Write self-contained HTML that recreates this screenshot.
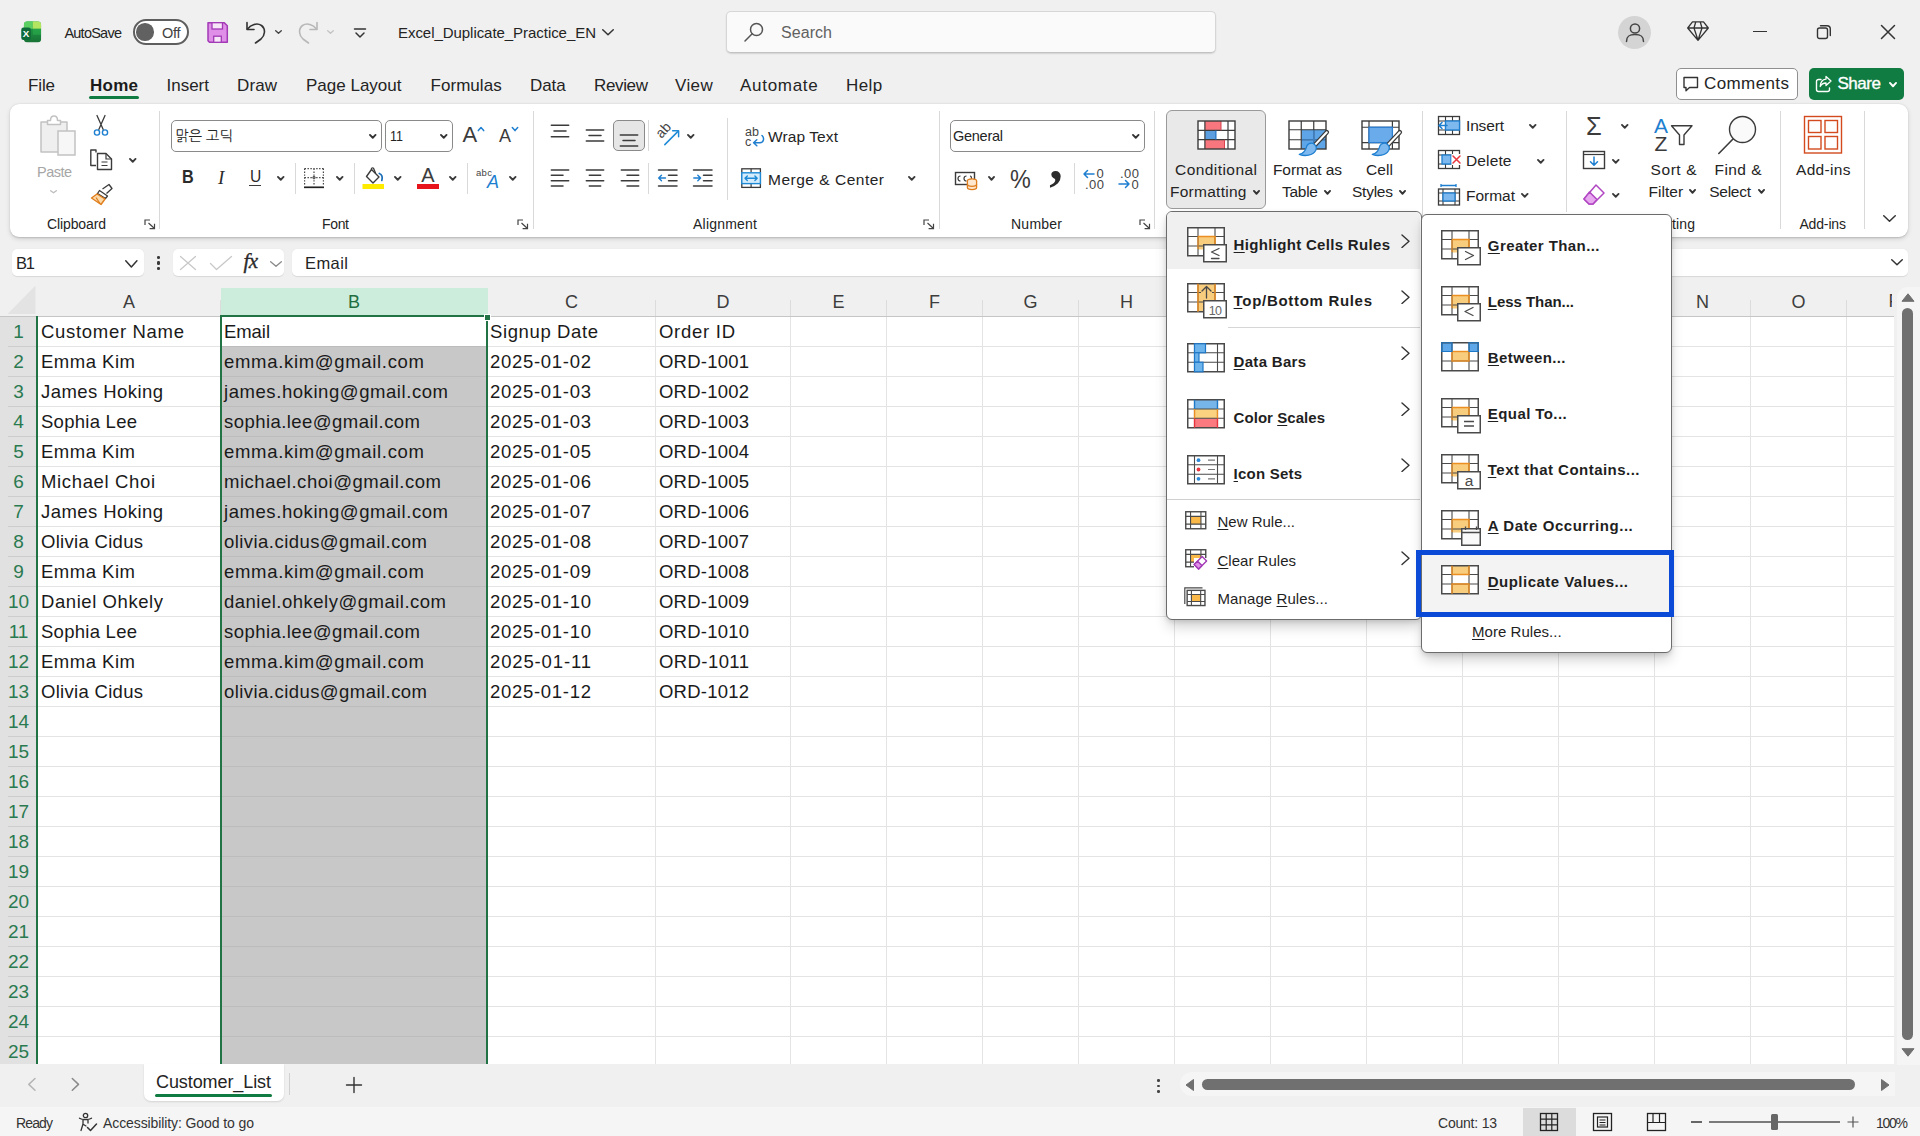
<!DOCTYPE html>
<html lang="en"><head><meta charset="utf-8"><title>Excel_Duplicate_Practice_EN - Excel</title>
<style>
html,body{margin:0;padding:0;}
body{width:1920px;height:1136px;overflow:hidden;background:#f0f0f0;position:relative;font-family:'Liberation Sans', 'NanumGothic', sans-serif;}
body div, body span.t, body svg{position:absolute;}
span.t{white-space:nowrap;display:block;}
u{text-decoration:underline;text-underline-offset:2px;text-decoration-thickness:1px;}
</style></head>
<body>
<svg style="left:20px;top:20px;" width="24" height="24" viewBox="0 0 24 24">
<defs><clipPath id="xlc"><rect x="3.75" y="1.25" width="17.5" height="21.25" rx="4"/></clipPath>
<linearGradient id="xlg" x1="0" y1="0" x2="0" y2="1"><stop offset="0" stop-color="#23a448"/><stop offset="1" stop-color="#187236"/></linearGradient></defs>
<g clip-path="url(#xlc)">
<rect x="3.75" y="1.25" width="17.5" height="21.25" fill="url(#xlg)"/>
<rect x="3.75" y="1.25" width="9" height="7.5" fill="#5ccf63"/>
<rect x="12.75" y="1.25" width="8.5" height="7.5" fill="#b4e561"/>
<rect x="12.75" y="8.75" width="8.5" height="6" fill="#2bb04f" opacity=".55"/>
</g>
<rect x="1.25" y="7.5" width="9.6" height="12.5" rx="2.2" fill="#0f6a3a"/>
<text x="6.05" y="17.3" font-size="9.8" font-weight="700" fill="#fff" text-anchor="middle" font-family="Liberation Sans">X</text>
</svg>
<span id="t1" class="t" style="left:64.4px;top:22.68px;font-size:14.5px;line-height:20px;color:#242424;letter-spacing:-0.756px;">AutoSave</span>
<div style="left:133px;top:19.4px;width:51.7px;height:21.6px;background:#fff;border:2px solid #5e5e5e;border-radius:14px;"></div>
<div style="left:136.25px;top:23.1px;width:17.5px;height:17.5px;background:#616161;border-radius:50%;"></div>
<span id="t2" class="t" style="left:162px;top:22.68px;font-size:14.5px;line-height:20px;color:#424242;letter-spacing:-0.239px;">Off</span>
<svg style="left:206px;top:21px;" width="24" height="24" viewBox="0 0 24 24">
<path d="M2 1.7 H18.3 L21.3 4.7 V21.3 H3.5 L2 19.8 Z" fill="#e08fe8" stroke="#a23ab6" stroke-width="1.5" stroke-linejoin="round"/>
<rect x="6" y="1.7" width="10.5" height="6.3" fill="#f6e6f8" stroke="#a23ab6" stroke-width="1.3"/>
<rect x="7.7" y="15.2" width="7.6" height="6.1" fill="#f6e6f8" stroke="#a23ab6" stroke-width="1.3"/>
</svg>
<svg style="left:244px;top:19px;" width="24" height="26" viewBox="0 0 24 26">
<path d="M3 3.5 V10.5 H10" fill="none" stroke="#333" stroke-width="1.6" stroke-linecap="round" stroke-linejoin="round"/>
<path d="M3.5 10 C7 5.5 13 3.5 17.5 6.5 C22 10 21 16.5 17 20 L11.5 24" fill="none" stroke="#333" stroke-width="1.6" stroke-linecap="round"/>
</svg>
<svg style="left:274px;top:29px;" width="9" height="6" viewBox="0 0 9 6"><path d="M1.7 1.7 L4.5 4.3 L7.3 1.7" fill="none" stroke="#444" stroke-width="1.4" stroke-linecap="round" stroke-linejoin="round"/></svg>
<svg style="left:296px;top:19px;" width="24" height="26" viewBox="0 0 24 26">
<path d="M21 3.5 V10.5 H14" fill="none" stroke="#b8b8b8" stroke-width="1.6" stroke-linecap="round" stroke-linejoin="round"/>
<path d="M20.5 10 C17 5.5 11 3.5 6.5 6.5 C2 10 3 16.5 7 20 L12.5 24" fill="none" stroke="#b8b8b8" stroke-width="1.6" stroke-linecap="round"/>
</svg>
<svg style="left:326px;top:29px;" width="9" height="6" viewBox="0 0 9 6"><path d="M1.7 1.7 L4.5 4.3 L7.3 1.7" fill="none" stroke="#c4c4c4" stroke-width="1.4" stroke-linecap="round" stroke-linejoin="round"/></svg>
<svg style="left:353px;top:27px;" width="14" height="12" viewBox="0 0 14 12"><path d="M1.5 2 H12.5" stroke="#333" stroke-width="1.5" stroke-linecap="round"/><path d="M3 6 L7 10 L11 6" fill="none" stroke="#333" stroke-width="1.5" stroke-linecap="round" stroke-linejoin="round"/></svg>
<span id="t3" class="t" style="left:398px;top:22.30px;font-size:15px;line-height:21px;color:#242424;letter-spacing:-0.049px;">Excel_Duplicate_Practice_EN</span>
<svg style="left:601px;top:28px;" width="14" height="8.5" viewBox="0 0 14 8.5"><path d="M1.75 1.75 L7.0 6.75 L12.25 1.75" fill="none" stroke="#333" stroke-width="1.5" stroke-linecap="round" stroke-linejoin="round"/></svg>
<div style="left:726px;top:11px;width:488px;height:40px;background:#fafafa;border:1px solid #d6d6d6;border-bottom-color:#c2c2c2;border-radius:5px;box-shadow:0 1px 1.5px rgba(0,0,0,.12);"></div>
<svg style="left:743px;top:21px;" width="22" height="22" viewBox="0 0 22 22"><circle cx="13.5" cy="8.5" r="6" fill="none" stroke="#555" stroke-width="1.5"/><path d="M9.2 12.8 L2 20" stroke="#555" stroke-width="1.5" stroke-linecap="round"/></svg>
<span id="t4" class="t" style="left:781px;top:22.26px;font-size:16px;line-height:22px;color:#616161;letter-spacing:0.059px;">Search</span>
<div style="left:1618px;top:16px;width:33px;height:33px;background:#d4d4d4;border-radius:50%;"></div>
<svg style="left:1622px;top:19px;" width="26" height="26" viewBox="0 0 26 26"><circle cx="13" cy="9.5" r="4.6" fill="none" stroke="#444" stroke-width="1.5"/><path d="M4.5 22.5 C4.5 16.5 8 15.5 13 15.5 C18 15.5 21.5 16.5 21.5 22.5" fill="none" stroke="#444" stroke-width="1.5" stroke-linecap="round"/></svg>
<svg style="left:1686px;top:20px;" width="24" height="22" viewBox="0 0 24 22"><path d="M6.5 1.8 H17.5 L22.3 8 L12 20.3 L1.7 8 Z M1.7 8 H22.3 M9.8 1.8 L8 8 L12 20.3 L16 8 L14.2 1.8" fill="none" stroke="#333" stroke-width="1.3" stroke-linejoin="round"/></svg>
<div style="left:1753px;top:30.5px;width:14px;height:1.5px;background:#333;"></div>
<svg style="left:1816px;top:24px;" width="16" height="16" viewBox="0 0 16 16"><rect x="1.5" y="4" width="10" height="10.5" rx="2" fill="none" stroke="#333" stroke-width="1.4"/><path d="M4.5 1.7 H11 C13 1.7 14.3 3 14.3 5 V11.5" fill="none" stroke="#333" stroke-width="1.4" stroke-linecap="round"/></svg>
<svg style="left:1880px;top:24px;" width="16" height="16" viewBox="0 0 16 16"><path d="M1.5 1.5 L14.5 14.5 M14.5 1.5 L1.5 14.5" stroke="#333" stroke-width="1.5" stroke-linecap="round"/></svg>
<span id="t5" class="t" style="left:28px;top:73.71px;font-size:17px;line-height:24px;color:#242424;letter-spacing:-0.135px;">File</span>
<span id="t6" class="t" style="left:90px;top:73.71px;font-size:17px;line-height:24px;color:#1b1b1b;font-weight:700;letter-spacing:0.255px;">Home</span>
<span id="t7" class="t" style="left:166.5px;top:73.71px;font-size:17px;line-height:24px;color:#242424;letter-spacing:-0.006px;">Insert</span>
<span id="t8" class="t" style="left:237px;top:73.71px;font-size:17px;line-height:24px;color:#242424;letter-spacing:0.109px;">Draw</span>
<span id="t9" class="t" style="left:306px;top:73.71px;font-size:17px;line-height:24px;color:#242424;letter-spacing:0.003px;">Page Layout</span>
<span id="t10" class="t" style="left:430.5px;top:73.71px;font-size:17px;line-height:24px;color:#242424;letter-spacing:0.049px;">Formulas</span>
<span id="t11" class="t" style="left:530px;top:73.71px;font-size:17px;line-height:24px;color:#242424;letter-spacing:-0.074px;">Data</span>
<span id="t12" class="t" style="left:594px;top:73.71px;font-size:17px;line-height:24px;color:#242424;letter-spacing:-0.350px;">Review</span>
<span id="t13" class="t" style="left:675px;top:73.71px;font-size:17px;line-height:24px;color:#242424;letter-spacing:0.384px;">View</span>
<span id="t14" class="t" style="left:740px;top:73.71px;font-size:17px;line-height:24px;color:#242424;letter-spacing:0.705px;">Automate</span>
<span id="t15" class="t" style="left:846px;top:73.71px;font-size:17px;line-height:24px;color:#242424;letter-spacing:0.444px;">Help</span>
<div style="left:89px;top:96px;width:50px;height:3px;background:#107c41;border-radius:1.5px;"></div>
<div style="left:1676px;top:68px;width:120px;height:30px;background:#fff;border:1px solid #8f8f8f;border-radius:5px;"></div>
<svg style="left:1682px;top:76px;" width="18" height="17" viewBox="0 0 18 17"><path d="M2 1.5 H15.5 V11.5 H7.5 L4 14.8 V11.5 H2 Z" fill="none" stroke="#333" stroke-width="1.4" stroke-linejoin="round"/></svg>
<span id="t16" class="t" style="left:1704px;top:72.31px;font-size:17px;line-height:24px;color:#242424;letter-spacing:0.402px;">Comments</span>
<div style="left:1809px;top:68px;width:95px;height:32px;background:#107c41;border-radius:5px;"></div>
<svg style="left:1815px;top:75px;" width="18" height="18" viewBox="0 0 18 18"><path d="M6 4.5 H3.5 C2.4 4.5 1.5 5.4 1.5 6.5 V14.5 C1.5 15.6 2.4 16.5 3.5 16.5 H12.5 C13.6 16.5 14.5 15.6 14.5 14.5 V13" fill="none" stroke="#fff" stroke-width="1.4" stroke-linecap="round"/><path d="M11 1.5 L16 6 L11 10.5 V8 C8 8 6.3 9.2 5.2 11.5 C5.4 7.5 7.5 4.5 11 4.2 Z" fill="none" stroke="#fff" stroke-width="1.3" stroke-linejoin="round"/></svg>
<span id="t17" class="t" style="left:1837.5px;top:72.31px;font-size:17px;line-height:24px;color:#fff;letter-spacing:-0.469px;-webkit-text-stroke:0.35px #fff;">Share</span>
<svg style="left:1888px;top:81px;" width="10" height="7.2" viewBox="0 0 10 7.2"><path d="M1.95 1.95 L5.0 5.25 L8.05 1.95" fill="none" stroke="#fff" stroke-width="1.9" stroke-linecap="round" stroke-linejoin="round"/></svg>
<div style="left:10px;top:104px;width:1898px;height:133px;background:#fff;border-radius:9px;box-shadow:0 2px 5px rgba(0,0,0,.13),0 0.5px 1.5px rgba(0,0,0,.14);"></div>
<svg style="left:38px;top:114px;" width="40" height="44" viewBox="0 0 40 44">
<path d="M3 8 H29 V38 H3 Z" fill="#efefef" stroke="#c2c2c2" stroke-width="1.5" stroke-linejoin="round"/>
<path d="M9.5 10.5 V6.5 H12.5 C12.5 3.5 14 2 16 2 C18 2 19.5 3.5 19.5 6.5 H22.5 V10.5 Z" fill="#fff" stroke="#c2c2c2" stroke-width="1.5" stroke-linejoin="round"/>
<rect x="20" y="17" width="17" height="24" fill="#f7f7f7" stroke="#c2c2c2" stroke-width="1.5"/>
</svg>
<span id="t18" class="t" style="left:37px;top:161.98px;font-size:14.5px;line-height:20px;color:#a6a6a6;letter-spacing:-0.523px;">Paste</span>
<svg style="left:49px;top:189px;" width="9" height="5.5" viewBox="0 0 9 5.5"><path d="M1.65 1.65 L4.5 3.85 L7.35 1.65" fill="none" stroke="#bdbdbd" stroke-width="1.3" stroke-linecap="round" stroke-linejoin="round"/></svg>
<svg style="left:92px;top:113px;" width="18" height="26" viewBox="0 0 18 26">
<path d="M5 2.5 L11.2 16.5 M13 2.5 L6.8 16.5" stroke="#3b3b3b" stroke-width="1.3" stroke-linecap="round"/>
<circle cx="5" cy="19.5" r="2.6" fill="none" stroke="#1e7fd0" stroke-width="1.4"/>
<circle cx="13" cy="19.5" r="2.6" fill="none" stroke="#1e7fd0" stroke-width="1.4"/>
</svg>
<svg style="left:89px;top:148px;" width="25" height="24" viewBox="0 0 25 24">
<path d="M7 4.5 V2 H1.8 V17.5 H7" fill="none" stroke="#3b3b3b" stroke-width="1.4" stroke-linejoin="round"/>
<path d="M8.5 5.5 H17 L22.5 11 V21.5 H8.5 Z" fill="#fff" stroke="#3b3b3b" stroke-width="1.4" stroke-linejoin="round"/>
<path d="M17 5.5 V11 H22.5" fill="none" stroke="#3b3b3b" stroke-width="1.2"/>
<path d="M12.5 14 H18.5 M12.5 17.5 H18.5" stroke="#3b3b3b" stroke-width="1.2"/>
</svg>
<svg style="left:128px;top:157px;" width="9.5" height="6.7" viewBox="0 0 9.5 6.7"><path d="M1.95 1.95 L4.75 4.75 L7.55 1.95" fill="none" stroke="#3a3a3a" stroke-width="1.9" stroke-linecap="round" stroke-linejoin="round"/></svg>
<svg style="left:90px;top:183px;" width="24" height="23" viewBox="0 0 24 23">
<path d="M12.5 6 L19 1.5 L22 5.5 L16.5 10.5" fill="#fff" stroke="#3b3b3b" stroke-width="1.3" stroke-linejoin="round"/>
<path d="M9.5 7.5 L17.5 13 L15.5 15.5 L7.5 10.5 Z" fill="#fff" stroke="#3b3b3b" stroke-width="1.3" stroke-linejoin="round"/>
<path d="M7 11 L15 16 L11 21.5 L1.5 15 Z" fill="#fbd9a8" stroke="#e07d1c" stroke-width="1.4" stroke-linejoin="round"/>
<path d="M6 14.5 L10 20.5" stroke="#e07d1c" stroke-width="1.2"/>
</svg>
<span id="t19" class="t" style="left:47px;top:214.15px;font-size:14px;line-height:20px;color:#242424;letter-spacing:-0.117px;">Clipboard</span>
<svg style="left:144px;top:218.5px;" width="12" height="11" viewBox="0 0 12 11"><path d="M1 6 V1 H6" fill="none" stroke="#444" stroke-width="1.2"/><path d="M4.5 4 L10.5 9.5 M10.5 4.8 V9.7 H5.6" fill="none" stroke="#444" stroke-width="1.2" stroke-linejoin="miter"/></svg>
<div style="left:159px;top:111px;width:1px;height:118px;background:#d9d9d9;"></div>
<div style="left:171px;top:120px;width:209px;height:30px;background:#fff;border:1px solid #8a8a8a;border-radius:5px;"></div>
<span id="t20" class="t" style="left:175px;top:125.98px;font-size:14.5px;line-height:20px;color:#242424;letter-spacing:-0.141px;">맑은 고딕</span>
<svg style="left:368px;top:133px;" width="9.5" height="6.7" viewBox="0 0 9.5 6.7"><path d="M1.95 1.95 L4.75 4.75 L7.55 1.95" fill="none" stroke="#333" stroke-width="1.9" stroke-linecap="round" stroke-linejoin="round"/></svg>
<div style="left:385px;top:120px;width:66px;height:30px;background:#fff;border:1px solid #8a8a8a;border-radius:5px;"></div>
<span id="t21" class="t" style="left:389.5px;top:125.98px;font-size:14.5px;line-height:20px;color:#242424;transform:scaleX(.86);transform-origin:0 0;">11</span>
<svg style="left:439px;top:133px;" width="9.5" height="6.7" viewBox="0 0 9.5 6.7"><path d="M1.95 1.95 L4.75 4.75 L7.55 1.95" fill="none" stroke="#333" stroke-width="1.9" stroke-linecap="round" stroke-linejoin="round"/></svg>
<span id="t22" class="t" style="left:462.5px;top:119.38px;font-size:22px;line-height:31px;color:#3b3b3b;">A</span>
<svg style="left:475.5px;top:124.5px;" width="10" height="8" viewBox="0 0 10 8"><path d="M2.3 5.6 L5 2.6 L7.7 5.6" fill="none" stroke="#1e7fd0" stroke-width="1.5" stroke-linecap="round" stroke-linejoin="round"/></svg>
<span id="t23" class="t" style="left:499px;top:123.76px;font-size:18px;line-height:25px;color:#3b3b3b;">A</span>
<svg style="left:509.5px;top:124.5px;" width="10" height="8" viewBox="0 0 10 8"><path d="M2.3 2.6 L5 5.6 L7.7 2.6" fill="none" stroke="#1e7fd0" stroke-width="1.5" stroke-linecap="round" stroke-linejoin="round"/></svg>
<span id="t24" class="t" style="left:181.5px;top:164.96px;font-size:18px;line-height:25px;color:#2b2b2b;font-weight:700;transform:scaleX(.9);transform-origin:0 0;">B</span>
<span id="t25" class="t" style="left:216px;top:163.62px;font-size:19px;line-height:27px;color:#2b2b2b;font-style:italic;font-family:'Liberation Serif', serif;padding-left:2px;">I</span>
<span id="t26" class="t" style="left:249.5px;top:165.11px;font-size:17px;line-height:24px;color:#2b2b2b;transform:scaleX(.92);transform-origin:0 0;">U</span>
<div style="left:249.3px;top:185px;width:12px;height:1.4px;background:#3a3a3a;"></div>
<svg style="left:276px;top:175px;" width="9.5" height="6.7" viewBox="0 0 9.5 6.7"><path d="M1.95 1.95 L4.75 4.75 L7.55 1.95" fill="none" stroke="#3a3a3a" stroke-width="1.9" stroke-linecap="round" stroke-linejoin="round"/></svg>
<div style="left:295px;top:163px;width:1px;height:31px;background:#d9d9d9;"></div>
<svg style="left:303px;top:167px;" width="22" height="22" viewBox="0 0 22 22">
<path d="M1.6 1.6 H20.4 M1.6 1.6 V19 M20.4 1.6 V19 M11 1.6 V19 M1.6 10.6 H20.4" stroke="#444" stroke-width="1.2" stroke-dasharray="1.4 1.5" fill="none"/>
<circle cx="11" cy="10.6" r="1.3" fill="none" stroke="#444" stroke-width="0.9"/>
<path d="M1 20.3 H21" stroke="#222" stroke-width="1.7"/>
</svg>
<svg style="left:335px;top:175px;" width="9.5" height="6.7" viewBox="0 0 9.5 6.7"><path d="M1.95 1.95 L4.75 4.75 L7.55 1.95" fill="none" stroke="#3a3a3a" stroke-width="1.9" stroke-linecap="round" stroke-linejoin="round"/></svg>
<div style="left:354px;top:163px;width:1px;height:31px;background:#d9d9d9;"></div>
<svg style="left:362px;top:166px;" width="24" height="25" viewBox="0 0 24 25">
<path d="M9.5 3.5 L17 11 L11 17 L4.5 10.5 Z" fill="#fff" stroke="#3b3b3b" stroke-width="1.4" stroke-linejoin="round"/>
<path d="M9.5 3.5 C9 2.2 10.5 1.4 11.5 2.2 L13.5 7" fill="none" stroke="#3b3b3b" stroke-width="1.3" stroke-linecap="round"/>
<path d="M17.3 7.5 C19.8 8.5 20.8 11 19.8 14.5" fill="none" stroke="#1e6fb8" stroke-width="1.7" stroke-linecap="round"/>
<rect x="0.5" y="18" width="21.5" height="5" fill="#ffeb00"/>
</svg>
<svg style="left:393px;top:175px;" width="9.5" height="6.7" viewBox="0 0 9.5 6.7"><path d="M1.95 1.95 L4.75 4.75 L7.55 1.95" fill="none" stroke="#3a3a3a" stroke-width="1.9" stroke-linecap="round" stroke-linejoin="round"/></svg>
<span id="t27" class="t" style="left:421.3px;top:161.07px;font-size:20px;line-height:28px;color:#3b3b3b;">A</span>
<div style="left:417.2px;top:184.2px;width:21.5px;height:5px;background:#e8141c;"></div>
<svg style="left:448px;top:175px;" width="9.5" height="6.7" viewBox="0 0 9.5 6.7"><path d="M1.95 1.95 L4.75 4.75 L7.55 1.95" fill="none" stroke="#3a3a3a" stroke-width="1.9" stroke-linecap="round" stroke-linejoin="round"/></svg>
<div style="left:467px;top:163px;width:1px;height:31px;background:#d9d9d9;"></div>
<span id="t28" class="t" style="left:476px;top:166.21px;font-size:9.5px;line-height:13px;color:#444;letter-spacing:0.336px;">abc</span>
<span id="t29" class="t" style="left:487px;top:170.26px;font-size:18px;line-height:25px;color:#1e7fd0;font-style:italic;">A</span>
<svg style="left:508px;top:175px;" width="9.5" height="6.7" viewBox="0 0 9.5 6.7"><path d="M1.95 1.95 L4.75 4.75 L7.55 1.95" fill="none" stroke="#3a3a3a" stroke-width="1.9" stroke-linecap="round" stroke-linejoin="round"/></svg>
<span id="t30" class="t" style="left:322px;top:214.15px;font-size:14px;line-height:20px;color:#242424;letter-spacing:-0.339px;">Font</span>
<svg style="left:517px;top:218.5px;" width="12" height="11" viewBox="0 0 12 11"><path d="M1 6 V1 H6" fill="none" stroke="#444" stroke-width="1.2"/><path d="M4.5 4 L10.5 9.5 M10.5 4.8 V9.7 H5.6" fill="none" stroke="#444" stroke-width="1.2" stroke-linejoin="miter"/></svg>
<div style="left:532.5px;top:111px;width:1px;height:118px;background:#d9d9d9;"></div>
<svg style="left:548px;top:120px;" width="24" height="24" viewBox="0 0 24 24"><path d="M3.3 5.3 H20.7" stroke="#3b3b3b" stroke-width="1.5" stroke-linecap="round"/><path d="M6 11 H18" stroke="#3b3b3b" stroke-width="1.5" stroke-linecap="round"/><path d="M3.3 16.7 H20.7" stroke="#3b3b3b" stroke-width="1.5" stroke-linecap="round"/></svg>
<svg style="left:582.5px;top:120px;" width="24" height="24" viewBox="0 0 24 24"><path d="M3.3 10 H20.7" stroke="#3b3b3b" stroke-width="1.5" stroke-linecap="round"/><path d="M6 15.6 H18" stroke="#3b3b3b" stroke-width="1.5" stroke-linecap="round"/><path d="M3.3 21 H20.7" stroke="#3b3b3b" stroke-width="1.5" stroke-linecap="round"/></svg>
<div style="left:613px;top:120px;width:30px;height:29px;background:#e6e6e6;border:1px solid #8a8a8a;border-radius:5px;"></div>
<svg style="left:617px;top:127px;" width="24" height="24" viewBox="0 0 24 24"><path d="M3.3 8 H20.7" stroke="#3b3b3b" stroke-width="1.5" stroke-linecap="round"/><path d="M6 13.6 H18" stroke="#3b3b3b" stroke-width="1.5" stroke-linecap="round"/><path d="M3.3 19 H20.7" stroke="#3b3b3b" stroke-width="1.5" stroke-linecap="round"/></svg>
<div style="left:648px;top:120px;width:1px;height:31px;background:#d9d9d9;"></div>
<svg style="left:654px;top:122px;" width="30" height="28" viewBox="0 0 30 28">
<text x="0" y="0" font-size="14" fill="#444" font-family="Liberation Sans" transform="translate(7.5,17) rotate(-48)">ab</text>
<path d="M10.8 22.6 L24 9.4" stroke="#1e8ad6" stroke-width="1.5" stroke-linecap="round"/>
<path d="M18.6 8.8 H24.6 V14.8" fill="none" stroke="#1e8ad6" stroke-width="1.5" stroke-linecap="round" stroke-linejoin="round"/>
</svg>
<svg style="left:686px;top:133px;" width="9.5" height="6.7" viewBox="0 0 9.5 6.7"><path d="M1.95 1.95 L4.75 4.75 L7.55 1.95" fill="none" stroke="#3a3a3a" stroke-width="1.9" stroke-linecap="round" stroke-linejoin="round"/></svg>
<svg style="left:548px;top:163px;" width="24" height="24" viewBox="0 0 24 24"><path d="M3.3 7 H20.7" stroke="#3b3b3b" stroke-width="1.5" stroke-linecap="round"/><path d="M3.3 12.3 H15" stroke="#3b3b3b" stroke-width="1.5" stroke-linecap="round"/><path d="M3.3 17.7 H20.7" stroke="#3b3b3b" stroke-width="1.5" stroke-linecap="round"/><path d="M3.3 23 H15" stroke="#3b3b3b" stroke-width="1.5" stroke-linecap="round"/></svg>
<svg style="left:582.5px;top:163px;" width="24" height="24" viewBox="0 0 24 24"><path d="M3.3 7 H20.7" stroke="#3b3b3b" stroke-width="1.5" stroke-linecap="round"/><path d="M6.3 12.3 H17.7" stroke="#3b3b3b" stroke-width="1.5" stroke-linecap="round"/><path d="M3.3 17.7 H20.7" stroke="#3b3b3b" stroke-width="1.5" stroke-linecap="round"/><path d="M6.3 23 H17.7" stroke="#3b3b3b" stroke-width="1.5" stroke-linecap="round"/></svg>
<svg style="left:617.5px;top:163px;" width="24" height="24" viewBox="0 0 24 24"><path d="M3.3 7 H20.7" stroke="#3b3b3b" stroke-width="1.5" stroke-linecap="round"/><path d="M9 12.3 H20.7" stroke="#3b3b3b" stroke-width="1.5" stroke-linecap="round"/><path d="M3.3 17.7 H20.7" stroke="#3b3b3b" stroke-width="1.5" stroke-linecap="round"/><path d="M9 23 H20.7" stroke="#3b3b3b" stroke-width="1.5" stroke-linecap="round"/></svg>
<div style="left:648px;top:163px;width:1px;height:31px;background:#d9d9d9;"></div>
<svg style="left:656px;top:163px;" width="24" height="26" viewBox="0 0 24 26">
<path d="M2.5 7 H21 M12.5 12.3 H21 M12.5 17.7 H21 M2.5 23 H21" stroke="#3b3b3b" stroke-width="1.5" stroke-linecap="round"/>
<path d="M9.5 15 H2.8 M5.5 12.2 L2.7 15 L5.5 17.8" fill="none" stroke="#1e7fd0" stroke-width="1.4" stroke-linecap="round" stroke-linejoin="round"/>
</svg>
<svg style="left:691px;top:163px;" width="24" height="26" viewBox="0 0 24 26">
<path d="M2.5 7 H21 M12.5 12.3 H21 M12.5 17.7 H21 M2.5 23 H21" stroke="#3b3b3b" stroke-width="1.5" stroke-linecap="round"/>
<path d="M2.8 15 H9.5 M6.8 12.2 L9.6 15 L6.8 17.8" fill="none" stroke="#1e7fd0" stroke-width="1.4" stroke-linecap="round" stroke-linejoin="round"/>
</svg>
<div style="left:727px;top:118px;width:1px;height:82px;background:#d9d9d9;"></div>
<span id="t31" class="t" style="left:745px;top:122.67px;font-size:12.5px;line-height:18px;color:#444;letter-spacing:0.094px;">ab</span>
<span id="t32" class="t" style="left:745px;top:132.67px;font-size:12.5px;line-height:18px;color:#444;">c</span>
<svg style="left:751px;top:134px;" width="14" height="14" viewBox="0 0 14 14"><path d="M11 1.5 C13.5 3.5 13 8.5 9 8.8 H3 M5.8 5.8 L2.6 8.8 L5.8 11.8" fill="none" stroke="#1e7fd0" stroke-width="1.5" stroke-linecap="round" stroke-linejoin="round"/></svg>
<span id="t33" class="t" style="left:768px;top:126.13px;font-size:15.5px;line-height:22px;color:#242424;letter-spacing:0.098px;">Wrap Text</span>
<svg style="left:740px;top:167px;" width="23" height="23" viewBox="0 0 23 23">
<rect x="1.8" y="1.8" width="18.6" height="18.6" fill="#fff" stroke="#3b3b3b" stroke-width="1.3"/>
<path d="M11.1 1.8 V5.8 M11.1 16.6 V20.4" stroke="#3b3b3b" stroke-width="1.2"/>
<rect x="1.8" y="5.8" width="18.6" height="10.8" fill="#d4ecfb" stroke="#1e8ad6" stroke-width="1.4"/>
<path d="M5 11.2 H17.2 M7.3 8.9 L5 11.2 L7.3 13.5 M14.9 8.9 L17.2 11.2 L14.9 13.5" fill="none" stroke="#1e8ad6" stroke-width="1.4" stroke-linecap="round" stroke-linejoin="round"/>
</svg>
<span id="t34" class="t" style="left:768px;top:168.63px;font-size:15.5px;line-height:22px;color:#242424;letter-spacing:0.506px;">Merge &amp; Center</span>
<svg style="left:907px;top:175px;" width="9.5" height="6.7" viewBox="0 0 9.5 6.7"><path d="M1.95 1.95 L4.75 4.75 L7.55 1.95" fill="none" stroke="#3a3a3a" stroke-width="1.9" stroke-linecap="round" stroke-linejoin="round"/></svg>
<span id="t35" class="t" style="left:693px;top:214.15px;font-size:14px;line-height:20px;color:#242424;letter-spacing:0.217px;">Alignment</span>
<svg style="left:923px;top:218.5px;" width="12" height="11" viewBox="0 0 12 11"><path d="M1 6 V1 H6" fill="none" stroke="#444" stroke-width="1.2"/><path d="M4.5 4 L10.5 9.5 M10.5 4.8 V9.7 H5.6" fill="none" stroke="#444" stroke-width="1.2" stroke-linejoin="miter"/></svg>
<div style="left:939px;top:111px;width:1px;height:118px;background:#d9d9d9;"></div>
<div style="left:950px;top:120px;width:193px;height:30px;background:#fff;border:1px solid #8a8a8a;border-radius:5px;"></div>
<span id="t36" class="t" style="left:953px;top:125.98px;font-size:14.5px;line-height:20px;color:#242424;letter-spacing:-0.266px;">General</span>
<svg style="left:1131px;top:133px;" width="9.5" height="6.7" viewBox="0 0 9.5 6.7"><path d="M1.95 1.95 L4.75 4.75 L7.55 1.95" fill="none" stroke="#333" stroke-width="1.9" stroke-linecap="round" stroke-linejoin="round"/></svg>
<svg style="left:954px;top:171px;" width="25" height="20" viewBox="0 0 25 20">
<rect x="1.5" y="1.5" width="19" height="12" fill="#fff" stroke="#3b3b3b" stroke-width="1.4"/>
<path d="M6.5 5 C4.5 5 4 6.5 4 7.5 C4 8.5 4.5 10 6.5 10 M12.5 5 C10.5 5 10 6.5 10 7.5 C10 8.5 10.5 10 12.5 10 M16 5 C18 5 18 10 16 10" fill="none" stroke="#3b3b3b" stroke-width="1.2"/>
<ellipse cx="18" cy="10" rx="4.6" ry="2.2" fill="#fde7cf" stroke="#e07d1c" stroke-width="1.3"/>
<path d="M13.4 10 V16.5 C13.4 19.2 22.6 19.2 22.6 16.5 V10" fill="#fde7cf" stroke="#e07d1c" stroke-width="1.3"/>
<path d="M13.4 13.3 C13.4 16 22.6 16 22.6 13.3" fill="none" stroke="#e07d1c" stroke-width="1.3"/>
</svg>
<svg style="left:987px;top:175px;" width="9" height="6.7" viewBox="0 0 9 6.7"><path d="M1.95 1.95 L4.5 4.75 L7.05 1.95" fill="none" stroke="#3a3a3a" stroke-width="1.9" stroke-linecap="round" stroke-linejoin="round"/></svg>
<span id="t37" class="t" style="left:1010px;top:160.99px;font-size:26px;line-height:36px;color:#3b3b3b;transform:scaleX(.9);transform-origin:0 0;">%</span>
<span id="t38" class="t" style="left:1049.3px;top:122.79px;font-size:54px;line-height:76px;color:#2b2b2b;font-weight:700;font-family:'Liberation Serif', serif;">,</span>
<div style="left:1074px;top:163px;width:1px;height:31px;background:#d9d9d9;"></div>
<span id="t39" class="t" style="left:1096.5px;top:164.50px;font-size:13px;line-height:18px;color:#444;">0</span>
<span id="t40" class="t" style="left:1085px;top:175.50px;font-size:13px;line-height:18px;color:#444;letter-spacing:0.461px;">.00</span>
<svg style="left:1082px;top:168px;" width="14" height="12" viewBox="0 0 14 12"><path d="M12 6 H2 M5.5 2.5 L2 6 L5.5 9.5" fill="none" stroke="#1e7fd0" stroke-width="1.5" stroke-linecap="round" stroke-linejoin="round"/></svg>
<span id="t41" class="t" style="left:1120px;top:164.50px;font-size:13px;line-height:18px;color:#444;letter-spacing:0.461px;">.00</span>
<span id="t42" class="t" style="left:1131.5px;top:175.50px;font-size:13px;line-height:18px;color:#444;">0</span>
<svg style="left:1117px;top:178px;" width="14" height="12" viewBox="0 0 14 12"><path d="M2 6 H12 M8.5 2.5 L12 6 L8.5 9.5" fill="none" stroke="#1e7fd0" stroke-width="1.5" stroke-linecap="round" stroke-linejoin="round"/></svg>
<span id="t43" class="t" style="left:1011px;top:214.15px;font-size:14px;line-height:20px;color:#242424;letter-spacing:0.241px;">Number</span>
<svg style="left:1139px;top:218.5px;" width="12" height="11" viewBox="0 0 12 11"><path d="M1 6 V1 H6" fill="none" stroke="#444" stroke-width="1.2"/><path d="M4.5 4 L10.5 9.5 M10.5 4.8 V9.7 H5.6" fill="none" stroke="#444" stroke-width="1.2" stroke-linejoin="miter"/></svg>
<div style="left:1154px;top:111px;width:1px;height:118px;background:#d9d9d9;"></div>
<div style="left:1166px;top:110px;width:98px;height:97px;background:#e9e9e9;border:1px solid #9a9a9a;border-radius:6px;"></div>
<svg style="left:1196.5px;top:119.6px;" width="40" height="32" viewBox="0 0 40 32">
<rect x="1" y="1" width="37" height="28" fill="#fff"/>
<rect x="7.9" y="1" width="16.1" height="9.4" fill="#f8777e"/>
<rect x="7.9" y="10.4" width="11" height="9.3" fill="#5c9fe0"/>
<rect x="7.9" y="19.7" width="19.6" height="9.3" fill="#f8777e"/>
<path d="M1 10.4 H38 M1 19.7 H38 M7.9 1 V29 M31 1 V29" stroke="#3b3b3b" stroke-width="1.2" fill="none"/>
<path d="M24 1 V10.4 M27.5 19.7 V29" stroke="#d8434c" stroke-width="1"/>
<path d="M18.9 10.4 V19.7" stroke="#1e6fc0" stroke-width="1.2"/>
<rect x="1" y="1" width="37" height="28" fill="none" stroke="#3b3b3b" stroke-width="1.4"/>
</svg>
<span id="t44" class="t" style="left:1175px;top:159.13px;font-size:15.5px;line-height:22px;color:#242424;letter-spacing:0.444px;">Conditional</span>
<span id="t45" class="t" style="left:1170px;top:180.63px;font-size:15.5px;line-height:22px;color:#242424;letter-spacing:0.267px;">Formatting</span>
<svg style="left:1252px;top:188.5px;" width="9" height="6.7" viewBox="0 0 9 6.7"><path d="M1.95 1.95 L4.5 4.75 L7.05 1.95" fill="none" stroke="#333" stroke-width="1.9" stroke-linecap="round" stroke-linejoin="round"/></svg>
<svg style="left:1287.75px;top:119.6px;" width="44" height="38" viewBox="0 0 44 38">
<rect x="1" y="1" width="37" height="28" fill="#fff"/>
<rect x="13.25" y="9.75" width="24.75" height="19.25" fill="#5ea5e8"/>
<path d="M1 9.75 H38 M1 19.75 H38 M13.25 1 V29 M25.75 1 V29" stroke="#3b3b3b" stroke-width="1.2"/>
<path d="M13.8 19.75 H37.4 M25.75 10.3 V28.4" stroke="#3f86cf" stroke-width="1.2"/>
<rect x="1" y="1" width="37" height="28" fill="none" stroke="#3b3b3b" stroke-width="1.4"/>
<g transform="translate(1,1)">
<path d="M37.8 11.2 L25 25" stroke="#3b3b3b" stroke-width="4.6" stroke-linecap="round" fill="none"/>
<path d="M37.8 11.2 L24 26" stroke="#fff" stroke-width="2" stroke-linecap="round" fill="none"/>
<path d="M24 22.3 C20.5 21.8 18 23.8 17.2 26.8 C16.3 30 14 32.3 10.3 33.3 C16 35.6 23.8 34.6 26.8 29.2 C27.8 27.2 27.2 24.3 24 22.3 Z" fill="#7db9ee" stroke="#1e7fd0" stroke-width="1.3" stroke-linejoin="round"/>
</g></svg>
<span id="t46" class="t" style="left:1273px;top:159.13px;font-size:15.5px;line-height:22px;color:#242424;letter-spacing:-0.096px;">Format as</span>
<span id="t47" class="t" style="left:1282px;top:180.63px;font-size:15.5px;line-height:22px;color:#242424;letter-spacing:-0.266px;">Table</span>
<svg style="left:1323px;top:188.5px;" width="9" height="6.7" viewBox="0 0 9 6.7"><path d="M1.95 1.95 L4.5 4.75 L7.05 1.95" fill="none" stroke="#333" stroke-width="1.9" stroke-linecap="round" stroke-linejoin="round"/></svg>
<svg style="left:1360.5px;top:119.6px;" width="44" height="38" viewBox="0 0 44 38">
<rect x="1" y="1" width="37" height="28" fill="#fff"/>
<path d="M1 7.25 H38 M1 22.6 H38 M8 1 V29 M31.4 1 V29" stroke="#3b3b3b" stroke-width="1.2"/>
<rect x="8" y="7.25" width="23.4" height="15.35" fill="#6aaceb" stroke="#2b7fd3" stroke-width="1.3"/>
<rect x="1" y="1" width="37" height="28" fill="none" stroke="#3b3b3b" stroke-width="1.4"/>
<g transform="translate(1,1)">
<path d="M37.8 11.2 L25 25" stroke="#3b3b3b" stroke-width="4.6" stroke-linecap="round" fill="none"/>
<path d="M37.8 11.2 L24 26" stroke="#fff" stroke-width="2" stroke-linecap="round" fill="none"/>
<path d="M24 22.3 C20.5 21.8 18 23.8 17.2 26.8 C16.3 30 14 32.3 10.3 33.3 C16 35.6 23.8 34.6 26.8 29.2 C27.8 27.2 27.2 24.3 24 22.3 Z" fill="#7db9ee" stroke="#1e7fd0" stroke-width="1.3" stroke-linejoin="round"/>
</g></svg>
<span id="t48" class="t" style="left:1366px;top:159.13px;font-size:15.5px;line-height:22px;color:#242424;letter-spacing:0.099px;">Cell</span>
<span id="t49" class="t" style="left:1352px;top:180.63px;font-size:15.5px;line-height:22px;color:#242424;letter-spacing:-0.244px;">Styles</span>
<svg style="left:1397.5px;top:188.5px;" width="9" height="6.7" viewBox="0 0 9 6.7"><path d="M1.95 1.95 L4.5 4.75 L7.05 1.95" fill="none" stroke="#333" stroke-width="1.9" stroke-linecap="round" stroke-linejoin="round"/></svg>
<div style="left:1422px;top:111px;width:1px;height:118px;background:#d9d9d9;"></div>
<svg style="left:1437px;top:115px;" width="25" height="22" viewBox="0 0 25 22">
<rect x="1.5" y="1.5" width="21" height="18" fill="#fff" stroke="#3b3b3b" stroke-width="1.3"/>
<path d="M1.5 6 H22.5 M1.5 15 H22.5 M8.5 1.5 V19.5 M15.5 1.5 V19.5" stroke="#3b3b3b" stroke-width="1.1"/>
<rect x="8.5" y="6" width="14" height="9" fill="#7db9ee" stroke="#1e7fd0" stroke-width="1.3"/>
<path d="M2.2 10.5 H10 M5 7.5 L2 10.5 L5 13.5" fill="none" stroke="#1e7fd0" stroke-width="1.5" stroke-linecap="round" stroke-linejoin="round"/>
</svg>
<span id="t50" class="t" style="left:1466px;top:115.13px;font-size:15.5px;line-height:22px;color:#242424;letter-spacing:-0.153px;">Insert</span>
<svg style="left:1528px;top:123px;" width="9.5" height="6.7" viewBox="0 0 9.5 6.7"><path d="M1.95 1.95 L4.75 4.75 L7.55 1.95" fill="none" stroke="#3a3a3a" stroke-width="1.9" stroke-linecap="round" stroke-linejoin="round"/></svg>
<svg style="left:1437px;top:149px;" width="25" height="22" viewBox="0 0 25 22">
<rect x="1.5" y="1.5" width="21" height="18" fill="#fff" stroke="#3b3b3b" stroke-width="1.3"/>
<path d="M1.5 6 H22.5 M1.5 15 H22.5 M8.5 1.5 V19.5 M15.5 1.5 V19.5" stroke="#3b3b3b" stroke-width="1.1"/>
<rect x="5" y="6" width="9" height="9" fill="#7db9ee" stroke="#1e7fd0" stroke-width="1.3"/>
<rect x="14.5" y="5" width="9.5" height="11" fill="#fff"/>
<path d="M16 7 L23 14 M23 7 L16 14" stroke="#e8343c" stroke-width="1.5" stroke-linecap="round"/>
</svg>
<span id="t51" class="t" style="left:1466px;top:150.13px;font-size:15.5px;line-height:22px;color:#242424;letter-spacing:0.138px;">Delete</span>
<svg style="left:1536px;top:158px;" width="9.5" height="6.7" viewBox="0 0 9.5 6.7"><path d="M1.95 1.95 L4.75 4.75 L7.55 1.95" fill="none" stroke="#3a3a3a" stroke-width="1.9" stroke-linecap="round" stroke-linejoin="round"/></svg>
<svg style="left:1437px;top:183px;" width="25" height="24" viewBox="0 0 25 24">
<path d="M4 2.5 H19 M4 1 V4 M19 1 V4" stroke="#1e7fd0" stroke-width="1.3"/>
<rect x="1.5" y="6" width="21" height="16" fill="#fff" stroke="#3b3b3b" stroke-width="1.3"/>
<path d="M1.5 10 H22.5 M1.5 18 H22.5 M6 6 V22 M18 6 V22" stroke="#3b3b3b" stroke-width="1.1"/>
<rect x="6" y="10" width="12" height="8" fill="#7db9ee" stroke="#1e7fd0" stroke-width="1.3"/>
</svg>
<span id="t52" class="t" style="left:1466px;top:184.63px;font-size:15.5px;line-height:22px;color:#242424;letter-spacing:-0.019px;">Format</span>
<svg style="left:1519.5px;top:192px;" width="9.5" height="6.7" viewBox="0 0 9.5 6.7"><path d="M1.95 1.95 L4.75 4.75 L7.55 1.95" fill="none" stroke="#3a3a3a" stroke-width="1.9" stroke-linecap="round" stroke-linejoin="round"/></svg>
<div style="left:1566px;top:111px;width:1px;height:101px;background:#d9d9d9;"></div>
<span id="t53" class="t" style="left:1586px;top:107.96px;font-size:25.5px;line-height:36px;color:#3b3b3b;">Σ</span>
<svg style="left:1620px;top:123px;" width="9.5" height="6.7" viewBox="0 0 9.5 6.7"><path d="M1.95 1.95 L4.75 4.75 L7.55 1.95" fill="none" stroke="#3a3a3a" stroke-width="1.9" stroke-linecap="round" stroke-linejoin="round"/></svg>
<svg style="left:1582px;top:150px;" width="25" height="21" viewBox="0 0 25 21">
<rect x="1.5" y="1.5" width="21" height="17" fill="#fff" stroke="#3b3b3b" stroke-width="1.4"/>
<path d="M1.5 4.5 H22.5" stroke="#3b3b3b" stroke-width="1.2"/>
<path d="M12 7 V15 M8.5 11.8 L12 15.3 L15.5 11.8" fill="none" stroke="#1e7fd0" stroke-width="1.5" stroke-linecap="round" stroke-linejoin="round"/>
</svg>
<svg style="left:1611px;top:157.5px;" width="9.5" height="6.7" viewBox="0 0 9.5 6.7"><path d="M1.95 1.95 L4.75 4.75 L7.55 1.95" fill="none" stroke="#3a3a3a" stroke-width="1.9" stroke-linecap="round" stroke-linejoin="round"/></svg>
<svg style="left:1582px;top:183px;" width="24" height="24" viewBox="0 0 24 24">
<path d="M14 2 L22 10 L11 21 H7 L2 16 Z" fill="#fff" stroke="#b146c2" stroke-width="1.5" stroke-linejoin="round"/>
<path d="M7.5 9 L15 16.5 L11 21 H7 L2 16 Z" fill="#e7a8ef" stroke="#b146c2" stroke-width="1.5" stroke-linejoin="round"/>
</svg>
<svg style="left:1611px;top:192px;" width="9.5" height="6.7" viewBox="0 0 9.5 6.7"><path d="M1.95 1.95 L4.75 4.75 L7.55 1.95" fill="none" stroke="#3a3a3a" stroke-width="1.9" stroke-linecap="round" stroke-linejoin="round"/></svg>
<span id="t54" class="t" style="left:1654px;top:111.22px;font-size:21px;line-height:29px;color:#1e7fd0;">A</span>
<span id="t55" class="t" style="left:1654.5px;top:129.22px;font-size:21px;line-height:29px;color:#3b3b3b;">Z</span>
<svg style="left:1670px;top:124px;" width="24" height="24" viewBox="0 0 24 24"><path d="M1.5 1.8 H22 L14 11 V20.5 H9.5 V11 Z" fill="#fff" stroke="#3b3b3b" stroke-width="1.4" stroke-linejoin="round"/></svg>
<span id="t56" class="t" style="left:1650.5px;top:159.13px;font-size:15.5px;line-height:22px;color:#242424;letter-spacing:0.584px;">Sort &amp;</span>
<span id="t57" class="t" style="left:1648.5px;top:180.63px;font-size:15.5px;line-height:22px;color:#242424;letter-spacing:0.049px;">Filter</span>
<svg style="left:1688px;top:187.7px;" width="9" height="6.7" viewBox="0 0 9 6.7"><path d="M1.95 1.95 L4.5 4.75 L7.05 1.95" fill="none" stroke="#333" stroke-width="1.9" stroke-linecap="round" stroke-linejoin="round"/></svg>
<svg style="left:1717px;top:115px;" width="42" height="41" viewBox="0 0 42 41"><circle cx="25.5" cy="14.5" r="13" fill="#fafafa" stroke="#3b3b3b" stroke-width="1.4"/><path d="M16 24 L1.8 38.5" stroke="#3b3b3b" stroke-width="1.6" stroke-linecap="round"/></svg>
<span id="t58" class="t" style="left:1714.5px;top:159.13px;font-size:15.5px;line-height:22px;color:#242424;letter-spacing:0.438px;">Find &amp;</span>
<span id="t59" class="t" style="left:1709.2px;top:180.63px;font-size:15.5px;line-height:22px;color:#242424;letter-spacing:-0.259px;">Select</span>
<svg style="left:1756.5px;top:187.7px;" width="9" height="6.7" viewBox="0 0 9 6.7"><path d="M1.95 1.95 L4.5 4.75 L7.05 1.95" fill="none" stroke="#333" stroke-width="1.9" stroke-linecap="round" stroke-linejoin="round"/></svg>
<span id="t60" class="t" style="left:1672px;top:214.15px;font-size:14px;line-height:20px;color:#242424;letter-spacing:0.141px;">ting</span>
<div style="left:1780px;top:111px;width:1px;height:118px;background:#d9d9d9;"></div>
<svg style="left:1803px;top:115px;" width="40" height="40" viewBox="0 0 40 40">
<rect x="1.5" y="1.5" width="37" height="36.5" fill="#fff" stroke="#d24a1e" stroke-width="1.4"/>
<rect x="5.5" y="5.5" width="12.5" height="12" fill="none" stroke="#d24a1e" stroke-width="1.4"/>
<rect x="22" y="5.5" width="12.5" height="12" fill="none" stroke="#d24a1e" stroke-width="1.4"/>
<rect x="5.5" y="21.5" width="12.5" height="12.5" fill="none" stroke="#d24a1e" stroke-width="1.4"/>
<rect x="22" y="21.5" width="12.5" height="12.5" fill="none" stroke="#d24a1e" stroke-width="1.4"/>
</svg>
<span id="t61" class="t" style="left:1796px;top:159.13px;font-size:15.5px;line-height:22px;color:#242424;letter-spacing:0.323px;">Add-ins</span>
<span id="t62" class="t" style="left:1799.4px;top:214.15px;font-size:14px;line-height:20px;color:#242424;letter-spacing:-0.145px;">Add-ins</span>
<div style="left:1864px;top:111px;width:1px;height:118px;background:#d9d9d9;"></div>
<svg style="left:1882px;top:214px;" width="15" height="9" viewBox="0 0 15 9"><path d="M1.75 1.75 L7.5 7.25 L13.25 1.75" fill="none" stroke="#333" stroke-width="1.5" stroke-linecap="round" stroke-linejoin="round"/></svg>
<div style="left:11.5px;top:249px;width:132.5px;height:27px;background:#fff;border-radius:5px;box-shadow:0 0.5px 1px rgba(0,0,0,.10);"></div>
<span id="t63" class="t" style="left:16px;top:251.78px;font-size:16.5px;line-height:23px;color:#242424;letter-spacing:-1.188px;">B1</span>
<svg style="left:124.3px;top:259.3px;" width="14.7" height="9.7" viewBox="0 0 14.7 9.7"><path d="M1.75 1.75 L7.35 7.949999999999999 L12.95 1.75" fill="none" stroke="#333" stroke-width="1.5" stroke-linecap="round" stroke-linejoin="round"/></svg>
<div style="left:157.1px;top:255.7px;width:3.4px;height:3.4px;background:#3a3a3a;border-radius:40%;"></div>
<div style="left:157.1px;top:261.3px;width:3.4px;height:3.4px;background:#3a3a3a;border-radius:40%;"></div>
<div style="left:157.1px;top:266.9px;width:3.4px;height:3.4px;background:#3a3a3a;border-radius:40%;"></div>
<div style="left:173.3px;top:249px;width:111px;height:27px;background:#fff;border-radius:5px;box-shadow:0 0.5px 1px rgba(0,0,0,.10);"></div>
<svg style="left:179px;top:255px;" width="18" height="16" viewBox="0 0 18 16"><path d="M1.5 1.5 L16.5 14.5 M16.5 1.5 L1.5 14.5" stroke="#c8c8c8" stroke-width="1.3" stroke-linecap="round"/></svg>
<svg style="left:209px;top:255px;" width="24" height="16" viewBox="0 0 24 16"><path d="M1.5 8.5 L7.5 14.5 L22.5 1.5" fill="none" stroke="#c8c8c8" stroke-width="1.3" stroke-linecap="round" stroke-linejoin="round"/></svg>
<span id="t64" class="t" style="left:243.5px;top:247.22px;font-size:21px;line-height:29px;color:#2b2b2b;font-style:italic;font-family:'Liberation Serif', serif;letter-spacing:-0.5px;-webkit-text-stroke:0.35px #2b2b2b;">fx</span>
<svg style="left:269px;top:259.5px;" width="14" height="8" viewBox="0 0 14 8"><path d="M1.65 1.65 L7.0 6.35 L12.35 1.65" fill="none" stroke="#8a8a8a" stroke-width="1.3" stroke-linecap="round" stroke-linejoin="round"/></svg>
<div style="left:291.7px;top:249px;width:1616.5px;height:27px;background:#fff;border-radius:5px;box-shadow:0 0.5px 1px rgba(0,0,0,.10);"></div>
<span id="t65" class="t" style="left:305px;top:251.78px;font-size:16.5px;line-height:23px;color:#242424;letter-spacing:0.434px;">Email</span>
<svg style="left:1890px;top:258px;" width="14" height="8.5" viewBox="0 0 14 8.5"><path d="M1.75 1.75 L7.0 6.75 L12.25 1.75" fill="none" stroke="#333" stroke-width="1.5" stroke-linecap="round" stroke-linejoin="round"/></svg>
<div style="left:0px;top:317px;width:1894px;height:747px;background:#fff;"></div>
<div style="left:0px;top:317px;width:36px;height:747px;background:#e1e1e1;"></div>
<svg style="left:6px;top:284px;" width="30" height="32" viewBox="0 0 30 32"><path d="M29.5 1.5 V30 H1.5 Z" fill="#e3e3e3"/></svg>
<div style="left:220.5px;top:287.5px;width:267px;height:28px;background:#cdeddc;"></div>
<div style="left:221px;top:347px;width:265px;height:717px;background:#c8c8c8;"></div>
<div style="left:37px;top:346px;width:1857px;height:1px;background:#e4e4e4;"></div>
<div style="left:8px;top:346px;width:28px;height:1px;background:#cdcdcd;"></div>
<div style="left:221px;top:346px;width:265px;height:1px;background:#bcbcbc;"></div>
<div style="left:37px;top:376px;width:1857px;height:1px;background:#e4e4e4;"></div>
<div style="left:8px;top:376px;width:28px;height:1px;background:#cdcdcd;"></div>
<div style="left:221px;top:376px;width:265px;height:1px;background:#bcbcbc;"></div>
<div style="left:37px;top:406px;width:1857px;height:1px;background:#e4e4e4;"></div>
<div style="left:8px;top:406px;width:28px;height:1px;background:#cdcdcd;"></div>
<div style="left:221px;top:406px;width:265px;height:1px;background:#bcbcbc;"></div>
<div style="left:37px;top:436px;width:1857px;height:1px;background:#e4e4e4;"></div>
<div style="left:8px;top:436px;width:28px;height:1px;background:#cdcdcd;"></div>
<div style="left:221px;top:436px;width:265px;height:1px;background:#bcbcbc;"></div>
<div style="left:37px;top:466px;width:1857px;height:1px;background:#e4e4e4;"></div>
<div style="left:8px;top:466px;width:28px;height:1px;background:#cdcdcd;"></div>
<div style="left:221px;top:466px;width:265px;height:1px;background:#bcbcbc;"></div>
<div style="left:37px;top:496px;width:1857px;height:1px;background:#e4e4e4;"></div>
<div style="left:8px;top:496px;width:28px;height:1px;background:#cdcdcd;"></div>
<div style="left:221px;top:496px;width:265px;height:1px;background:#bcbcbc;"></div>
<div style="left:37px;top:526px;width:1857px;height:1px;background:#e4e4e4;"></div>
<div style="left:8px;top:526px;width:28px;height:1px;background:#cdcdcd;"></div>
<div style="left:221px;top:526px;width:265px;height:1px;background:#bcbcbc;"></div>
<div style="left:37px;top:556px;width:1857px;height:1px;background:#e4e4e4;"></div>
<div style="left:8px;top:556px;width:28px;height:1px;background:#cdcdcd;"></div>
<div style="left:221px;top:556px;width:265px;height:1px;background:#bcbcbc;"></div>
<div style="left:37px;top:586px;width:1857px;height:1px;background:#e4e4e4;"></div>
<div style="left:8px;top:586px;width:28px;height:1px;background:#cdcdcd;"></div>
<div style="left:221px;top:586px;width:265px;height:1px;background:#bcbcbc;"></div>
<div style="left:37px;top:616px;width:1857px;height:1px;background:#e4e4e4;"></div>
<div style="left:8px;top:616px;width:28px;height:1px;background:#cdcdcd;"></div>
<div style="left:221px;top:616px;width:265px;height:1px;background:#bcbcbc;"></div>
<div style="left:37px;top:646px;width:1857px;height:1px;background:#e4e4e4;"></div>
<div style="left:8px;top:646px;width:28px;height:1px;background:#cdcdcd;"></div>
<div style="left:221px;top:646px;width:265px;height:1px;background:#bcbcbc;"></div>
<div style="left:37px;top:676px;width:1857px;height:1px;background:#e4e4e4;"></div>
<div style="left:8px;top:676px;width:28px;height:1px;background:#cdcdcd;"></div>
<div style="left:221px;top:676px;width:265px;height:1px;background:#bcbcbc;"></div>
<div style="left:37px;top:706px;width:1857px;height:1px;background:#e4e4e4;"></div>
<div style="left:8px;top:706px;width:28px;height:1px;background:#cdcdcd;"></div>
<div style="left:221px;top:706px;width:265px;height:1px;background:#bcbcbc;"></div>
<div style="left:37px;top:736px;width:1857px;height:1px;background:#e4e4e4;"></div>
<div style="left:8px;top:736px;width:28px;height:1px;background:#cdcdcd;"></div>
<div style="left:221px;top:736px;width:265px;height:1px;background:#bcbcbc;"></div>
<div style="left:37px;top:766px;width:1857px;height:1px;background:#e4e4e4;"></div>
<div style="left:8px;top:766px;width:28px;height:1px;background:#cdcdcd;"></div>
<div style="left:221px;top:766px;width:265px;height:1px;background:#bcbcbc;"></div>
<div style="left:37px;top:796px;width:1857px;height:1px;background:#e4e4e4;"></div>
<div style="left:8px;top:796px;width:28px;height:1px;background:#cdcdcd;"></div>
<div style="left:221px;top:796px;width:265px;height:1px;background:#bcbcbc;"></div>
<div style="left:37px;top:826px;width:1857px;height:1px;background:#e4e4e4;"></div>
<div style="left:8px;top:826px;width:28px;height:1px;background:#cdcdcd;"></div>
<div style="left:221px;top:826px;width:265px;height:1px;background:#bcbcbc;"></div>
<div style="left:37px;top:856px;width:1857px;height:1px;background:#e4e4e4;"></div>
<div style="left:8px;top:856px;width:28px;height:1px;background:#cdcdcd;"></div>
<div style="left:221px;top:856px;width:265px;height:1px;background:#bcbcbc;"></div>
<div style="left:37px;top:886px;width:1857px;height:1px;background:#e4e4e4;"></div>
<div style="left:8px;top:886px;width:28px;height:1px;background:#cdcdcd;"></div>
<div style="left:221px;top:886px;width:265px;height:1px;background:#bcbcbc;"></div>
<div style="left:37px;top:916px;width:1857px;height:1px;background:#e4e4e4;"></div>
<div style="left:8px;top:916px;width:28px;height:1px;background:#cdcdcd;"></div>
<div style="left:221px;top:916px;width:265px;height:1px;background:#bcbcbc;"></div>
<div style="left:37px;top:946px;width:1857px;height:1px;background:#e4e4e4;"></div>
<div style="left:8px;top:946px;width:28px;height:1px;background:#cdcdcd;"></div>
<div style="left:221px;top:946px;width:265px;height:1px;background:#bcbcbc;"></div>
<div style="left:37px;top:976px;width:1857px;height:1px;background:#e4e4e4;"></div>
<div style="left:8px;top:976px;width:28px;height:1px;background:#cdcdcd;"></div>
<div style="left:221px;top:976px;width:265px;height:1px;background:#bcbcbc;"></div>
<div style="left:37px;top:1006px;width:1857px;height:1px;background:#e4e4e4;"></div>
<div style="left:8px;top:1006px;width:28px;height:1px;background:#cdcdcd;"></div>
<div style="left:221px;top:1006px;width:265px;height:1px;background:#bcbcbc;"></div>
<div style="left:37px;top:1036px;width:1857px;height:1px;background:#e4e4e4;"></div>
<div style="left:8px;top:1036px;width:28px;height:1px;background:#cdcdcd;"></div>
<div style="left:221px;top:1036px;width:265px;height:1px;background:#bcbcbc;"></div>
<div style="left:0px;top:316px;width:1894px;height:1px;background:#c6c6c6;"></div>
<div style="left:655px;top:317px;width:1px;height:747px;background:#e4e4e4;"></div>
<div style="left:655px;top:300px;width:1px;height:16px;background:#dcdcdc;"></div>
<div style="left:790px;top:317px;width:1px;height:747px;background:#e4e4e4;"></div>
<div style="left:790px;top:300px;width:1px;height:16px;background:#dcdcdc;"></div>
<div style="left:886px;top:317px;width:1px;height:747px;background:#e4e4e4;"></div>
<div style="left:886px;top:300px;width:1px;height:16px;background:#dcdcdc;"></div>
<div style="left:982px;top:317px;width:1px;height:747px;background:#e4e4e4;"></div>
<div style="left:982px;top:300px;width:1px;height:16px;background:#dcdcdc;"></div>
<div style="left:1078px;top:317px;width:1px;height:747px;background:#e4e4e4;"></div>
<div style="left:1078px;top:300px;width:1px;height:16px;background:#dcdcdc;"></div>
<div style="left:1174px;top:317px;width:1px;height:747px;background:#e4e4e4;"></div>
<div style="left:1174px;top:300px;width:1px;height:16px;background:#dcdcdc;"></div>
<div style="left:1270px;top:317px;width:1px;height:747px;background:#e4e4e4;"></div>
<div style="left:1270px;top:300px;width:1px;height:16px;background:#dcdcdc;"></div>
<div style="left:1366px;top:317px;width:1px;height:747px;background:#e4e4e4;"></div>
<div style="left:1366px;top:300px;width:1px;height:16px;background:#dcdcdc;"></div>
<div style="left:1462px;top:317px;width:1px;height:747px;background:#e4e4e4;"></div>
<div style="left:1462px;top:300px;width:1px;height:16px;background:#dcdcdc;"></div>
<div style="left:1558px;top:317px;width:1px;height:747px;background:#e4e4e4;"></div>
<div style="left:1558px;top:300px;width:1px;height:16px;background:#dcdcdc;"></div>
<div style="left:1654px;top:317px;width:1px;height:747px;background:#e4e4e4;"></div>
<div style="left:1654px;top:300px;width:1px;height:16px;background:#dcdcdc;"></div>
<div style="left:1750px;top:317px;width:1px;height:747px;background:#e4e4e4;"></div>
<div style="left:1750px;top:300px;width:1px;height:16px;background:#dcdcdc;"></div>
<div style="left:1846px;top:317px;width:1px;height:747px;background:#e4e4e4;"></div>
<div style="left:1846px;top:300px;width:1px;height:16px;background:#dcdcdc;"></div>
<div style="left:220px;top:300px;width:1px;height:16px;background:#dcdcdc;"></div>
<span id="t66" class="t" style="left:37px;top:289.76px;font-size:18px;line-height:25px;color:#3d3d3d;width:184px;text-align:center;">A</span>
<span id="t67" class="t" style="left:220px;top:289.76px;font-size:18px;line-height:25px;color:#1e6e42;width:268px;text-align:center;">B</span>
<span id="t68" class="t" style="left:487px;top:289.76px;font-size:18px;line-height:25px;color:#3d3d3d;width:169px;text-align:center;">C</span>
<span id="t69" class="t" style="left:655px;top:289.76px;font-size:18px;line-height:25px;color:#3d3d3d;width:136px;text-align:center;">D</span>
<span id="t70" class="t" style="left:790px;top:289.76px;font-size:18px;line-height:25px;color:#3d3d3d;width:97px;text-align:center;">E</span>
<span id="t71" class="t" style="left:886px;top:289.76px;font-size:18px;line-height:25px;color:#3d3d3d;width:97px;text-align:center;">F</span>
<span id="t72" class="t" style="left:982px;top:289.76px;font-size:18px;line-height:25px;color:#3d3d3d;width:97px;text-align:center;">G</span>
<span id="t73" class="t" style="left:1078px;top:289.76px;font-size:18px;line-height:25px;color:#3d3d3d;width:97px;text-align:center;">H</span>
<span id="t74" class="t" style="left:1174px;top:289.76px;font-size:18px;line-height:25px;color:#3d3d3d;width:97px;text-align:center;">I</span>
<span id="t75" class="t" style="left:1270px;top:289.76px;font-size:18px;line-height:25px;color:#3d3d3d;width:97px;text-align:center;">J</span>
<span id="t76" class="t" style="left:1366px;top:289.76px;font-size:18px;line-height:25px;color:#3d3d3d;width:97px;text-align:center;">K</span>
<span id="t77" class="t" style="left:1462px;top:289.76px;font-size:18px;line-height:25px;color:#3d3d3d;width:97px;text-align:center;">L</span>
<span id="t78" class="t" style="left:1558px;top:289.76px;font-size:18px;line-height:25px;color:#3d3d3d;width:97px;text-align:center;">M</span>
<span id="t79" class="t" style="left:1654px;top:289.76px;font-size:18px;line-height:25px;color:#3d3d3d;width:97px;text-align:center;">N</span>
<span id="t80" class="t" style="left:1750px;top:289.76px;font-size:18px;line-height:25px;color:#3d3d3d;width:97px;text-align:center;">O</span>
<div style="left:1846px;top:288px;width:46px;height:28px;overflow:hidden;"><span class="t" style="left:42.5px;top:1px;font-size:18px;line-height:25px;color:#3d3d3d;">P</span></div>
<span id="t81" class="t" style="left:0px;top:317.92px;font-size:19px;line-height:27px;color:#2a7a50;font-family:'Liberation Sans', 'NanumGothic', sans-serif;width:37px;text-align:center;">1</span>
<span id="t82" class="t" style="left:0px;top:347.92px;font-size:19px;line-height:27px;color:#2a7a50;font-family:'Liberation Sans', 'NanumGothic', sans-serif;width:37px;text-align:center;">2</span>
<span id="t83" class="t" style="left:0px;top:377.92px;font-size:19px;line-height:27px;color:#2a7a50;font-family:'Liberation Sans', 'NanumGothic', sans-serif;width:37px;text-align:center;">3</span>
<span id="t84" class="t" style="left:0px;top:407.92px;font-size:19px;line-height:27px;color:#2a7a50;font-family:'Liberation Sans', 'NanumGothic', sans-serif;width:37px;text-align:center;">4</span>
<span id="t85" class="t" style="left:0px;top:437.92px;font-size:19px;line-height:27px;color:#2a7a50;font-family:'Liberation Sans', 'NanumGothic', sans-serif;width:37px;text-align:center;">5</span>
<span id="t86" class="t" style="left:0px;top:467.92px;font-size:19px;line-height:27px;color:#2a7a50;font-family:'Liberation Sans', 'NanumGothic', sans-serif;width:37px;text-align:center;">6</span>
<span id="t87" class="t" style="left:0px;top:497.92px;font-size:19px;line-height:27px;color:#2a7a50;font-family:'Liberation Sans', 'NanumGothic', sans-serif;width:37px;text-align:center;">7</span>
<span id="t88" class="t" style="left:0px;top:527.92px;font-size:19px;line-height:27px;color:#2a7a50;font-family:'Liberation Sans', 'NanumGothic', sans-serif;width:37px;text-align:center;">8</span>
<span id="t89" class="t" style="left:0px;top:557.92px;font-size:19px;line-height:27px;color:#2a7a50;font-family:'Liberation Sans', 'NanumGothic', sans-serif;width:37px;text-align:center;">9</span>
<span id="t90" class="t" style="left:0px;top:587.92px;font-size:19px;line-height:27px;color:#2a7a50;font-family:'Liberation Sans', 'NanumGothic', sans-serif;width:37px;text-align:center;">10</span>
<span id="t91" class="t" style="left:0px;top:617.92px;font-size:19px;line-height:27px;color:#2a7a50;font-family:'Liberation Sans', 'NanumGothic', sans-serif;width:37px;text-align:center;">11</span>
<span id="t92" class="t" style="left:0px;top:647.92px;font-size:19px;line-height:27px;color:#2a7a50;font-family:'Liberation Sans', 'NanumGothic', sans-serif;width:37px;text-align:center;">12</span>
<span id="t93" class="t" style="left:0px;top:677.92px;font-size:19px;line-height:27px;color:#2a7a50;font-family:'Liberation Sans', 'NanumGothic', sans-serif;width:37px;text-align:center;">13</span>
<span id="t94" class="t" style="left:0px;top:707.92px;font-size:19px;line-height:27px;color:#2a7a50;font-family:'Liberation Sans', 'NanumGothic', sans-serif;width:37px;text-align:center;">14</span>
<span id="t95" class="t" style="left:0px;top:737.92px;font-size:19px;line-height:27px;color:#2a7a50;font-family:'Liberation Sans', 'NanumGothic', sans-serif;width:37px;text-align:center;">15</span>
<span id="t96" class="t" style="left:0px;top:767.92px;font-size:19px;line-height:27px;color:#2a7a50;font-family:'Liberation Sans', 'NanumGothic', sans-serif;width:37px;text-align:center;">16</span>
<span id="t97" class="t" style="left:0px;top:797.92px;font-size:19px;line-height:27px;color:#2a7a50;font-family:'Liberation Sans', 'NanumGothic', sans-serif;width:37px;text-align:center;">17</span>
<span id="t98" class="t" style="left:0px;top:827.92px;font-size:19px;line-height:27px;color:#2a7a50;font-family:'Liberation Sans', 'NanumGothic', sans-serif;width:37px;text-align:center;">18</span>
<span id="t99" class="t" style="left:0px;top:857.92px;font-size:19px;line-height:27px;color:#2a7a50;font-family:'Liberation Sans', 'NanumGothic', sans-serif;width:37px;text-align:center;">19</span>
<span id="t100" class="t" style="left:0px;top:887.92px;font-size:19px;line-height:27px;color:#2a7a50;font-family:'Liberation Sans', 'NanumGothic', sans-serif;width:37px;text-align:center;">20</span>
<span id="t101" class="t" style="left:0px;top:917.92px;font-size:19px;line-height:27px;color:#2a7a50;font-family:'Liberation Sans', 'NanumGothic', sans-serif;width:37px;text-align:center;">21</span>
<span id="t102" class="t" style="left:0px;top:947.92px;font-size:19px;line-height:27px;color:#2a7a50;font-family:'Liberation Sans', 'NanumGothic', sans-serif;width:37px;text-align:center;">22</span>
<span id="t103" class="t" style="left:0px;top:977.92px;font-size:19px;line-height:27px;color:#2a7a50;font-family:'Liberation Sans', 'NanumGothic', sans-serif;width:37px;text-align:center;">23</span>
<span id="t104" class="t" style="left:0px;top:1007.92px;font-size:19px;line-height:27px;color:#2a7a50;font-family:'Liberation Sans', 'NanumGothic', sans-serif;width:37px;text-align:center;">24</span>
<span id="t105" class="t" style="left:0px;top:1037.92px;font-size:19px;line-height:27px;color:#2a7a50;font-family:'Liberation Sans', 'NanumGothic', sans-serif;width:37px;text-align:center;">25</span>
<div style="left:36px;top:316px;width:1.9px;height:748px;background:#217346;"></div>
<div style="left:219.5px;top:316px;width:2px;height:748px;background:#217346;"></div>
<div style="left:486px;top:316px;width:2px;height:748px;background:#217346;"></div>
<div style="left:221.5px;top:317px;width:264.5px;height:29px;background:#fff;"></div>
<div style="left:219.5px;top:315px;width:268px;height:1.6px;background:#217346;"></div>
<div style="left:484px;top:314px;width:5px;height:5px;background:#217346;border:1px solid #fff;"></div>
<span id="t106" class="t" style="left:41px;top:318.59px;font-size:18.5px;line-height:26px;color:#1a1a1a;font-family:'Liberation Sans', 'NanumGothic', sans-serif;letter-spacing:0.693px;">Customer Name</span>
<span id="t107" class="t" style="left:224px;top:318.59px;font-size:18.5px;line-height:26px;color:#1a1a1a;font-family:'Liberation Sans', 'NanumGothic', sans-serif;letter-spacing:-0.066px;">Email</span>
<span id="t108" class="t" style="left:490px;top:318.59px;font-size:18.5px;line-height:26px;color:#1a1a1a;font-family:'Liberation Sans', 'NanumGothic', sans-serif;letter-spacing:0.617px;">Signup Date</span>
<span id="t109" class="t" style="left:659px;top:318.59px;font-size:18.5px;line-height:26px;color:#1a1a1a;font-family:'Liberation Sans', 'NanumGothic', sans-serif;letter-spacing:0.723px;">Order ID</span>
<span id="t110" class="t" style="left:41px;top:348.59px;font-size:18.5px;line-height:26px;color:#1a1a1a;font-family:'Liberation Sans', 'NanumGothic', sans-serif;letter-spacing:0.507px;">Emma Kim</span>
<span id="t111" class="t" style="left:224px;top:348.59px;font-size:18.5px;line-height:26px;color:#1a1a1a;font-family:'Liberation Sans', 'NanumGothic', sans-serif;letter-spacing:0.683px;">emma.kim@gmail.com</span>
<span id="t112" class="t" style="left:490px;top:348.59px;font-size:18.5px;line-height:26px;color:#1a1a1a;font-family:'Liberation Sans', 'NanumGothic', sans-serif;letter-spacing:0.707px;">2025-01-02</span>
<span id="t113" class="t" style="left:659px;top:348.59px;font-size:18.5px;line-height:26px;color:#1a1a1a;font-family:'Liberation Sans', 'NanumGothic', sans-serif;letter-spacing:0.223px;">ORD-1001</span>
<span id="t114" class="t" style="left:41px;top:378.59px;font-size:18.5px;line-height:26px;color:#1a1a1a;font-family:'Liberation Sans', 'NanumGothic', sans-serif;letter-spacing:0.435px;">James Hoking</span>
<span id="t115" class="t" style="left:224px;top:378.59px;font-size:18.5px;line-height:26px;color:#1a1a1a;font-family:'Liberation Sans', 'NanumGothic', sans-serif;letter-spacing:0.567px;">james.hoking@gmail.com</span>
<span id="t116" class="t" style="left:490px;top:378.59px;font-size:18.5px;line-height:26px;color:#1a1a1a;font-family:'Liberation Sans', 'NanumGothic', sans-serif;letter-spacing:0.707px;">2025-01-03</span>
<span id="t117" class="t" style="left:659px;top:378.59px;font-size:18.5px;line-height:26px;color:#1a1a1a;font-family:'Liberation Sans', 'NanumGothic', sans-serif;letter-spacing:0.223px;">ORD-1002</span>
<span id="t118" class="t" style="left:41px;top:408.59px;font-size:18.5px;line-height:26px;color:#1a1a1a;font-family:'Liberation Sans', 'NanumGothic', sans-serif;letter-spacing:0.264px;">Sophia Lee</span>
<span id="t119" class="t" style="left:224px;top:408.59px;font-size:18.5px;line-height:26px;color:#1a1a1a;font-family:'Liberation Sans', 'NanumGothic', sans-serif;letter-spacing:0.451px;">sophia.lee@gmail.com</span>
<span id="t120" class="t" style="left:490px;top:408.59px;font-size:18.5px;line-height:26px;color:#1a1a1a;font-family:'Liberation Sans', 'NanumGothic', sans-serif;letter-spacing:0.707px;">2025-01-03</span>
<span id="t121" class="t" style="left:659px;top:408.59px;font-size:18.5px;line-height:26px;color:#1a1a1a;font-family:'Liberation Sans', 'NanumGothic', sans-serif;letter-spacing:0.223px;">ORD-1003</span>
<span id="t122" class="t" style="left:41px;top:438.59px;font-size:18.5px;line-height:26px;color:#1a1a1a;font-family:'Liberation Sans', 'NanumGothic', sans-serif;letter-spacing:0.507px;">Emma Kim</span>
<span id="t123" class="t" style="left:224px;top:438.59px;font-size:18.5px;line-height:26px;color:#1a1a1a;font-family:'Liberation Sans', 'NanumGothic', sans-serif;letter-spacing:0.683px;">emma.kim@gmail.com</span>
<span id="t124" class="t" style="left:490px;top:438.59px;font-size:18.5px;line-height:26px;color:#1a1a1a;font-family:'Liberation Sans', 'NanumGothic', sans-serif;letter-spacing:0.707px;">2025-01-05</span>
<span id="t125" class="t" style="left:659px;top:438.59px;font-size:18.5px;line-height:26px;color:#1a1a1a;font-family:'Liberation Sans', 'NanumGothic', sans-serif;letter-spacing:0.223px;">ORD-1004</span>
<span id="t126" class="t" style="left:41px;top:468.59px;font-size:18.5px;line-height:26px;color:#1a1a1a;font-family:'Liberation Sans', 'NanumGothic', sans-serif;letter-spacing:0.642px;">Michael Choi</span>
<span id="t127" class="t" style="left:224px;top:468.59px;font-size:18.5px;line-height:26px;color:#1a1a1a;font-family:'Liberation Sans', 'NanumGothic', sans-serif;letter-spacing:0.528px;">michael.choi@gmail.com</span>
<span id="t128" class="t" style="left:490px;top:468.59px;font-size:18.5px;line-height:26px;color:#1a1a1a;font-family:'Liberation Sans', 'NanumGothic', sans-serif;letter-spacing:0.707px;">2025-01-06</span>
<span id="t129" class="t" style="left:659px;top:468.59px;font-size:18.5px;line-height:26px;color:#1a1a1a;font-family:'Liberation Sans', 'NanumGothic', sans-serif;letter-spacing:0.223px;">ORD-1005</span>
<span id="t130" class="t" style="left:41px;top:498.59px;font-size:18.5px;line-height:26px;color:#1a1a1a;font-family:'Liberation Sans', 'NanumGothic', sans-serif;letter-spacing:0.435px;">James Hoking</span>
<span id="t131" class="t" style="left:224px;top:498.59px;font-size:18.5px;line-height:26px;color:#1a1a1a;font-family:'Liberation Sans', 'NanumGothic', sans-serif;letter-spacing:0.567px;">james.hoking@gmail.com</span>
<span id="t132" class="t" style="left:490px;top:498.59px;font-size:18.5px;line-height:26px;color:#1a1a1a;font-family:'Liberation Sans', 'NanumGothic', sans-serif;letter-spacing:0.707px;">2025-01-07</span>
<span id="t133" class="t" style="left:659px;top:498.59px;font-size:18.5px;line-height:26px;color:#1a1a1a;font-family:'Liberation Sans', 'NanumGothic', sans-serif;letter-spacing:0.223px;">ORD-1006</span>
<span id="t134" class="t" style="left:41px;top:528.59px;font-size:18.5px;line-height:26px;color:#1a1a1a;font-family:'Liberation Sans', 'NanumGothic', sans-serif;letter-spacing:0.300px;">Olivia Cidus</span>
<span id="t135" class="t" style="left:224px;top:528.59px;font-size:18.5px;line-height:26px;color:#1a1a1a;font-family:'Liberation Sans', 'NanumGothic', sans-serif;letter-spacing:0.449px;">olivia.cidus@gmail.com</span>
<span id="t136" class="t" style="left:490px;top:528.59px;font-size:18.5px;line-height:26px;color:#1a1a1a;font-family:'Liberation Sans', 'NanumGothic', sans-serif;letter-spacing:0.707px;">2025-01-08</span>
<span id="t137" class="t" style="left:659px;top:528.59px;font-size:18.5px;line-height:26px;color:#1a1a1a;font-family:'Liberation Sans', 'NanumGothic', sans-serif;letter-spacing:0.223px;">ORD-1007</span>
<span id="t138" class="t" style="left:41px;top:558.59px;font-size:18.5px;line-height:26px;color:#1a1a1a;font-family:'Liberation Sans', 'NanumGothic', sans-serif;letter-spacing:0.507px;">Emma Kim</span>
<span id="t139" class="t" style="left:224px;top:558.59px;font-size:18.5px;line-height:26px;color:#1a1a1a;font-family:'Liberation Sans', 'NanumGothic', sans-serif;letter-spacing:0.683px;">emma.kim@gmail.com</span>
<span id="t140" class="t" style="left:490px;top:558.59px;font-size:18.5px;line-height:26px;color:#1a1a1a;font-family:'Liberation Sans', 'NanumGothic', sans-serif;letter-spacing:0.707px;">2025-01-09</span>
<span id="t141" class="t" style="left:659px;top:558.59px;font-size:18.5px;line-height:26px;color:#1a1a1a;font-family:'Liberation Sans', 'NanumGothic', sans-serif;letter-spacing:0.223px;">ORD-1008</span>
<span id="t142" class="t" style="left:41px;top:588.59px;font-size:18.5px;line-height:26px;color:#1a1a1a;font-family:'Liberation Sans', 'NanumGothic', sans-serif;letter-spacing:0.569px;">Daniel Ohkely</span>
<span id="t143" class="t" style="left:224px;top:588.59px;font-size:18.5px;line-height:26px;color:#1a1a1a;font-family:'Liberation Sans', 'NanumGothic', sans-serif;letter-spacing:0.496px;">daniel.ohkely@gmail.com</span>
<span id="t144" class="t" style="left:490px;top:588.59px;font-size:18.5px;line-height:26px;color:#1a1a1a;font-family:'Liberation Sans', 'NanumGothic', sans-serif;letter-spacing:0.707px;">2025-01-10</span>
<span id="t145" class="t" style="left:659px;top:588.59px;font-size:18.5px;line-height:26px;color:#1a1a1a;font-family:'Liberation Sans', 'NanumGothic', sans-serif;letter-spacing:0.223px;">ORD-1009</span>
<span id="t146" class="t" style="left:41px;top:618.59px;font-size:18.5px;line-height:26px;color:#1a1a1a;font-family:'Liberation Sans', 'NanumGothic', sans-serif;letter-spacing:0.264px;">Sophia Lee</span>
<span id="t147" class="t" style="left:224px;top:618.59px;font-size:18.5px;line-height:26px;color:#1a1a1a;font-family:'Liberation Sans', 'NanumGothic', sans-serif;letter-spacing:0.451px;">sophia.lee@gmail.com</span>
<span id="t148" class="t" style="left:490px;top:618.59px;font-size:18.5px;line-height:26px;color:#1a1a1a;font-family:'Liberation Sans', 'NanumGothic', sans-serif;letter-spacing:0.707px;">2025-01-10</span>
<span id="t149" class="t" style="left:659px;top:618.59px;font-size:18.5px;line-height:26px;color:#1a1a1a;font-family:'Liberation Sans', 'NanumGothic', sans-serif;letter-spacing:0.223px;">ORD-1010</span>
<span id="t150" class="t" style="left:41px;top:648.59px;font-size:18.5px;line-height:26px;color:#1a1a1a;font-family:'Liberation Sans', 'NanumGothic', sans-serif;letter-spacing:0.507px;">Emma Kim</span>
<span id="t151" class="t" style="left:224px;top:648.59px;font-size:18.5px;line-height:26px;color:#1a1a1a;font-family:'Liberation Sans', 'NanumGothic', sans-serif;letter-spacing:0.683px;">emma.kim@gmail.com</span>
<span id="t152" class="t" style="left:490px;top:648.59px;font-size:18.5px;line-height:26px;color:#1a1a1a;font-family:'Liberation Sans', 'NanumGothic', sans-serif;letter-spacing:0.859px;">2025-01-11</span>
<span id="t153" class="t" style="left:659px;top:648.59px;font-size:18.5px;line-height:26px;color:#1a1a1a;font-family:'Liberation Sans', 'NanumGothic', sans-serif;letter-spacing:0.420px;">ORD-1011</span>
<span id="t154" class="t" style="left:41px;top:678.59px;font-size:18.5px;line-height:26px;color:#1a1a1a;font-family:'Liberation Sans', 'NanumGothic', sans-serif;letter-spacing:0.300px;">Olivia Cidus</span>
<span id="t155" class="t" style="left:224px;top:678.59px;font-size:18.5px;line-height:26px;color:#1a1a1a;font-family:'Liberation Sans', 'NanumGothic', sans-serif;letter-spacing:0.449px;">olivia.cidus@gmail.com</span>
<span id="t156" class="t" style="left:490px;top:678.59px;font-size:18.5px;line-height:26px;color:#1a1a1a;font-family:'Liberation Sans', 'NanumGothic', sans-serif;letter-spacing:0.707px;">2025-01-12</span>
<span id="t157" class="t" style="left:659px;top:678.59px;font-size:18.5px;line-height:26px;color:#1a1a1a;font-family:'Liberation Sans', 'NanumGothic', sans-serif;letter-spacing:0.223px;">ORD-1012</span>
<div style="left:0px;top:1064px;width:1920px;height:42px;background:#f0f0f0;"></div>
<div style="left:1896.5px;top:287px;width:24px;height:778px;background:#f5f5f5;border-radius:11px 0 0 0;"></div>
<svg style="left:1900px;top:292px;" width="16" height="11" viewBox="0 0 16 11"><path d="M8 1.8 L14 9.3 H2 Z" fill="#707070" stroke="#707070" stroke-width="1" stroke-linejoin="round"/></svg>
<div style="left:1902px;top:308px;width:11px;height:732px;background:#707070;border-radius:5.5px;"></div>
<svg style="left:1900px;top:1047px;" width="16" height="11" viewBox="0 0 16 11"><path d="M8 9.2 L14 1.7 H2 Z" fill="#707070" stroke="#707070" stroke-width="1" stroke-linejoin="round"/></svg>
<svg style="left:26px;top:1075px;" width="12" height="18" viewBox="0 0 12 18"><path d="M9 3.5 L2.8 9.4 L9 15.3" fill="none" stroke="#b5b5b5" stroke-width="1.5" stroke-linecap="round" stroke-linejoin="round"/></svg>
<svg style="left:69px;top:1075px;" width="12" height="18" viewBox="0 0 12 18"><path d="M3.3 3.5 L9.5 9.4 L3.3 15.3" fill="none" stroke="#8a8a8a" stroke-width="1.5" stroke-linecap="round" stroke-linejoin="round"/></svg>
<div style="left:144px;top:1064px;width:140px;height:37px;background:#fff;border-radius:0 0 7px 7px;box-shadow:0 1px 2px rgba(0,0,0,.12);"></div>
<span id="t158" class="t" style="left:156px;top:1069.76px;font-size:18px;line-height:25px;color:#242424;letter-spacing:-0.087px;">Customer_List</span>
<div style="left:155px;top:1094px;width:117px;height:2.5px;background:#107c41;border-radius:1.5px;"></div>
<div style="left:289px;top:1073px;width:1px;height:22px;background:#d0d0d0;"></div>
<svg style="left:345px;top:1076px;" width="18" height="18" viewBox="0 0 18 18"><path d="M9 1.5 V16.5 M1.5 9 H16.5" stroke="#333" stroke-width="1.4" stroke-linecap="round"/></svg>
<div style="left:1157px;top:1079px;width:2.5px;height:2.5px;background:#444;border-radius:50%;"></div>
<div style="left:1157px;top:1084.5px;width:2.5px;height:2.5px;background:#444;border-radius:50%;"></div>
<div style="left:1157px;top:1090px;width:2.5px;height:2.5px;background:#444;border-radius:50%;"></div>
<div style="left:1180px;top:1072px;width:715px;height:24px;background:#f5f5f5;border-radius:12px 0 0 12px;"></div>
<svg style="left:1184px;top:1078px;" width="12" height="14" viewBox="0 0 12 14"><path d="M2 7 L9.5 1.5 V12.5 Z" fill="#707070" stroke="#707070" stroke-width="1" stroke-linejoin="round"/></svg>
<div style="left:1202px;top:1079px;width:653px;height:11px;background:#707070;border-radius:5.5px;"></div>
<svg style="left:1879px;top:1078px;" width="12" height="14" viewBox="0 0 12 14"><path d="M10 7 L2.5 1.5 V12.5 Z" fill="#707070" stroke="#707070" stroke-width="1" stroke-linejoin="round"/></svg>
<div style="left:0px;top:1107px;width:1920px;height:29px;background:#f5f5f5;"></div>
<span id="t159" class="t" style="left:16px;top:1113.15px;font-size:14px;line-height:20px;color:#333;letter-spacing:-0.867px;">Ready</span>
<svg style="left:78px;top:1112px;" width="21" height="21" viewBox="0 0 21 21">
<circle cx="7.5" cy="3.5" r="2.2" fill="none" stroke="#333" stroke-width="1.3"/>
<path d="M1.5 6.2 C4 8 11 8 13.5 6.2 M5 8 V12 L3 18.5 M10 8 V11 M5.5 12.5 L8 14" fill="none" stroke="#333" stroke-width="1.3" stroke-linecap="round" stroke-linejoin="round"/>
<path d="M9.5 15.5 L12.5 18.5 L18.5 12" fill="none" stroke="#333" stroke-width="1.5" stroke-linecap="round" stroke-linejoin="round"/>
</svg>
<span id="t160" class="t" style="left:103px;top:1113.15px;font-size:14px;line-height:20px;color:#333;letter-spacing:-0.096px;">Accessibility: Good to go</span>
<span id="t161" class="t" style="left:1438px;top:1112.65px;font-size:14px;line-height:20px;color:#333;letter-spacing:-0.215px;">Count: 13</span>
<div style="left:1523px;top:1108px;width:53px;height:28px;background:#dcdcdc;"></div>
<svg style="left:1539px;top:1112px;" width="20" height="20" viewBox="0 0 20 20"><rect x="1.5" y="1.5" width="17" height="17" fill="none" stroke="#222" stroke-width="1.3"/><path d="M7.2 1.5 V18.5 M12.8 1.5 V18.5 M1.5 7.2 H18.5 M1.5 12.8 H18.5" stroke="#222" stroke-width="1.2"/></svg>
<svg style="left:1592px;top:1112px;" width="22" height="20" viewBox="0 0 22 20"><rect x="1.5" y="1.5" width="18" height="17" fill="none" stroke="#222" stroke-width="1.3"/><rect x="5.5" y="5" width="10" height="10" fill="none" stroke="#222" stroke-width="1.2"/><path d="M7.5 8 H13.5 M7.5 10.5 H13.5 M7.5 13 H13.5" stroke="#222" stroke-width="1"/></svg>
<svg style="left:1646px;top:1112px;" width="22" height="20" viewBox="0 0 22 20"><rect x="1.5" y="1.5" width="18" height="17" fill="none" stroke="#222" stroke-width="1.3"/><path d="M1.5 10.5 H19.5 M7 1.5 V10.5 M13.5 1.5 V10.5" stroke="#222" stroke-width="1.2"/></svg>
<div style="left:1691px;top:1121.3px;width:10.5px;height:1.4px;background:#666;"></div>
<div style="left:1709px;top:1121.2px;width:131px;height:1.6px;background:#7a7a7a;"></div>
<div style="left:1771px;top:1114px;width:7px;height:16px;background:#666;border-radius:1.5px;"></div>
<svg style="left:1846px;top:1115px;" width="14" height="14" viewBox="0 0 14 14"><path d="M7 1.5 V12.5 M1.5 7 H12.5" stroke="#555" stroke-width="1.2"/></svg>
<span id="t162" class="t" style="left:1876px;top:1112.65px;font-size:14px;line-height:20px;color:#333;letter-spacing:-1.271px;">100%</span>
<div style="left:1166px;top:211px;width:254px;height:407px;background:#fff;border:1px solid #6c6c6c;border-radius:6px;box-shadow:0 8px 14px -2px rgba(0,0,0,.20),0 2px 4px rgba(0,0,0,.10);"></div>
<div style="left:1167px;top:212px;width:253px;height:56.5px;background:#f0f0f0;border-radius:5px 5px 0 0;"></div>
<span id="t163" class="t" style="left:1233.6px;top:234.30px;font-size:15px;line-height:21px;color:#1f1f1f;font-weight:700;letter-spacing:0.318px;"><u>H</u>ighlight Cells Rules</span>
<svg style="left:1401px;top:233.5px;" width="9" height="14.5" viewBox="0 0 9 14.5"><path d="M1 1 L8 7.25 L1 13.5" fill="none" stroke="#333" stroke-width="1.4" stroke-linecap="round" stroke-linejoin="round"/></svg>
<span id="t164" class="t" style="left:1233.6px;top:290.30px;font-size:15px;line-height:21px;color:#1f1f1f;font-weight:700;letter-spacing:0.689px;"><u>T</u>op/Bottom Rules</span>
<svg style="left:1401px;top:289.5px;" width="9" height="14.5" viewBox="0 0 9 14.5"><path d="M1 1 L8 7.25 L1 13.5" fill="none" stroke="#333" stroke-width="1.4" stroke-linecap="round" stroke-linejoin="round"/></svg>
<span id="t165" class="t" style="left:1233.6px;top:351.30px;font-size:15px;line-height:21px;color:#1f1f1f;font-weight:700;letter-spacing:0.294px;"><u>D</u>ata Bars</span>
<svg style="left:1401px;top:345.5px;" width="9" height="14.5" viewBox="0 0 9 14.5"><path d="M1 1 L8 7.25 L1 13.5" fill="none" stroke="#333" stroke-width="1.4" stroke-linecap="round" stroke-linejoin="round"/></svg>
<span id="t166" class="t" style="left:1233.6px;top:406.90px;font-size:15px;line-height:21px;color:#1f1f1f;font-weight:700;letter-spacing:0.045px;">Color <u>S</u>cales</span>
<svg style="left:1401px;top:401.5px;" width="9" height="14.5" viewBox="0 0 9 14.5"><path d="M1 1 L8 7.25 L1 13.5" fill="none" stroke="#333" stroke-width="1.4" stroke-linecap="round" stroke-linejoin="round"/></svg>
<span id="t167" class="t" style="left:1233.6px;top:463.10px;font-size:15px;line-height:21px;color:#1f1f1f;font-weight:700;letter-spacing:0.212px;"><u>I</u>con Sets</span>
<svg style="left:1401px;top:457.5px;" width="9" height="14.5" viewBox="0 0 9 14.5"><path d="M1 1 L8 7.25 L1 13.5" fill="none" stroke="#333" stroke-width="1.4" stroke-linecap="round" stroke-linejoin="round"/></svg>
<svg style="left:1186.5px;top:226.5px;" width="41" height="37" viewBox="0 0 41 37"><rect x="0.75" y="0.75" width="36.5" height="28" fill="#fff"/><rect x="11" y="9.5" width="17" height="13" fill="#f9cd7e"/>
<path d="M0.75 9.5 H37.25 M0.75 19 H37.25 M11 0.75 V28.75 M28 0.75 V28.75" stroke="#4a4a4a" stroke-width="1.1" fill="none"/>
<rect x="0.75" y="0.75" width="36.5" height="28" fill="none" stroke="#4a4a4a" stroke-width="1.5"/><path d="M11 9.5 H28 V19" fill="none" stroke="#ec8f22" stroke-width="1.6"/><path d="M11 9.5 V22" stroke="#ec8f22" stroke-width="1.2"/><rect x="16.75" y="17.75" width="22.5" height="17" fill="#fff" stroke="#4a4a4a" stroke-width="1.5"/><path d="M32 21.5 L24.5 25 L32 28.5 M24.5 31.5 H32" fill="none" stroke="#4a4a4a" stroke-width="1.3" stroke-linecap="round" stroke-linejoin="round"/></svg>
<svg style="left:1186.5px;top:282.5px;" width="41" height="37" viewBox="0 0 41 37"><rect x="0.75" y="0.75" width="36.5" height="28" fill="#fff"/><rect x="11" y="0.75" width="17" height="28" fill="#f9cd7e"/>
<path d="M0.75 9.5 H37.25 M0.75 19 H37.25 M11 0.75 V28.75 M28 0.75 V28.75" stroke="#4a4a4a" stroke-width="1.1" fill="none"/>
<rect x="0.75" y="0.75" width="36.5" height="28" fill="none" stroke="#4a4a4a" stroke-width="1.5"/><path d="M11 0.75 V28.75 M28 0.75 V28.75" stroke="#ec8f22" stroke-width="1.5"/><rect x="14" y="2" width="11" height="14" fill="#f9cd7e"/><path d="M19.5 15 V3.5 M15 8 L19.5 3.5 L24 8" fill="none" stroke="#4a4a4a" stroke-width="1.3" stroke-linecap="round" stroke-linejoin="round"/><rect x="16.75" y="17.75" width="22.5" height="17" fill="#fff" stroke="#4a4a4a" stroke-width="1.5"/><text x="28" y="31.5" font-size="12.5" text-anchor="middle" fill="#666" font-family="Liberation Sans, sans-serif" letter-spacing="-0.8">10</text></svg>
<svg style="left:1186.5px;top:342.5px;" width="39" height="30" viewBox="0 0 39 30"><rect x="0.75" y="0.75" width="36.5" height="28" fill="#fff"/>
<path d="M0.75 9.75 H37.25 M0.75 19.25 H37.25 M7.5 0.75 V28.75 M30.5 0.75 V28.75" stroke="#4a4a4a" stroke-width="1.1" fill="none"/>
<rect x="0.75" y="0.75" width="36.5" height="28" fill="none" stroke="#4a4a4a" stroke-width="1.5"/><rect x="7.5" y="0.75" width="11" height="9" fill="#6db3ec" stroke="#1e78c8" stroke-width="1.2"/><rect x="7.5" y="9.75" width="4.5" height="9.5" fill="#6db3ec" stroke="#1e78c8" stroke-width="1.2"/><rect x="7.5" y="19.25" width="8.5" height="9.5" fill="#6db3ec" stroke="#1e78c8" stroke-width="1.2"/></svg>
<svg style="left:1186.5px;top:398.5px;" width="39" height="30" viewBox="0 0 39 30"><rect x="0.75" y="0.75" width="36.5" height="28" fill="#fff"/><rect x="7.5" y="0.75" width="23" height="9.5" fill="#76b5ea"/><rect x="7.5" y="10" width="23" height="9.5" fill="#fbd27f"/><rect x="7.5" y="19.25" width="23" height="9.5" fill="#fb7a7f"/>
<path d="M0.75 10 H37.25 M0.75 19.25 H37.25 M7.5 0.75 V28.75 M30.5 0.75 V28.75" stroke="#4a4a4a" stroke-width="1.1" fill="none"/>
<rect x="0.75" y="0.75" width="36.5" height="28" fill="none" stroke="#4a4a4a" stroke-width="1.5"/><path d="M7.5 0.75 V10 M30.5 0.75 V10" stroke="#1e78c8" stroke-width="1.3"/><path d="M7.5 19.25 V28.75 M30.5 19.25 V28.75" stroke="#e8343c" stroke-width="1.3"/><path d="M7.5 10 V19.25 M30.5 10 V19.25" stroke="#ec8f22" stroke-width="1.3"/></svg>
<svg style="left:1186.5px;top:454.5px;" width="39" height="30" viewBox="0 0 39 30"><rect x="0.75" y="0.75" width="36.5" height="28" fill="#fff"/>
<path d="M0.75 9.75 H37.25 M0.75 19.25 H37.25 M7.5 0.75 V28.75 M30.5 0.75 V28.75" stroke="#4a4a4a" stroke-width="1.1" fill="none"/>
<rect x="0.75" y="0.75" width="36.5" height="28" fill="none" stroke="#4a4a4a" stroke-width="1.5"/><circle cx="11.5" cy="5.2" r="1.9" fill="#2b88d8"/><circle cx="11.5" cy="14.5" r="1.9" fill="#e8343c"/><circle cx="11.5" cy="23.8" r="1.9" fill="#2b88d8"/><path d="M21 5.2 H28 M21 14.5 H28 M21 23.8 H28" stroke="#777" stroke-width="1.2"/></svg>
<div style="left:1228px;top:327px;width:192px;height:1px;background:#d6d6d6;"></div>
<div style="left:1167px;top:499px;width:253px;height:1px;background:#d0d0d0;"></div>
<span id="t168" class="t" style="left:1217.5px;top:510.90px;font-size:15px;line-height:21px;color:#1f1f1f;letter-spacing:-0.005px;"><u>N</u>ew Rule...</span>
<span id="t169" class="t" style="left:1217.5px;top:549.50px;font-size:15px;line-height:21px;color:#1f1f1f;letter-spacing:0.013px;"><u>C</u>lear Rules</span>
<span id="t170" class="t" style="left:1217.5px;top:588.10px;font-size:15px;line-height:21px;color:#1f1f1f;letter-spacing:0.089px;">Manage <u>R</u>ules...</span>
<svg style="left:1401px;top:551px;" width="9" height="14.5" viewBox="0 0 9 14.5"><path d="M1 1 L8 7.25 L1 13.5" fill="none" stroke="#333" stroke-width="1.4" stroke-linecap="round" stroke-linejoin="round"/></svg>
<svg style="left:1184.5px;top:510.7px;" width="23" height="20" viewBox="0 0 23 20"><rect x="0.75" y="0.75" width="20" height="17" fill="#fff"/><rect x="5.55" y="5.34" width="10.399999999999999" height="7.82" fill="#fbb94a"/><path d="M0.75 5.34 H20.75 M0.75 13.16 H20.75 M5.55 0.75 V17.75 M15.95 0.75 V17.75" stroke="#4a4a4a" stroke-width="1.1" fill="none"/><rect x="0.75" y="0.75" width="20" height="17" fill="none" stroke="#4a4a4a" stroke-width="1.4"/></svg>
<svg style="left:1184.5px;top:549px;" width="25" height="23" viewBox="0 0 25 23"><rect x="0.75" y="0.75" width="20" height="17" fill="#fff"/><rect x="5.55" y="5.34" width="10.399999999999999" height="7.82" fill="#fbb94a"/><path d="M0.75 5.34 H20.75 M0.75 13.16 H20.75 M5.55 0.75 V17.75 M15.95 0.75 V17.75" stroke="#4a4a4a" stroke-width="1.1" fill="none"/><rect x="0.75" y="0.75" width="20" height="17" fill="none" stroke="#4a4a4a" stroke-width="1.4"/><path d="M9 9 H22 V19 H9 Z" fill="#fff"/><path d="M17.2 7.6 L21.6 12 L13.6 20 L9.2 15.6 Z" fill="#fff" stroke="#a23ab6" stroke-width="1.4" stroke-linejoin="round"/><path d="M12.6 12.2 L17 16.6 L13.6 20 L9.2 15.6 Z" fill="#e08fe8" stroke="#a23ab6" stroke-width="1.4" stroke-linejoin="round"/></svg>
<svg style="left:1184.3px;top:586.6px;" width="24" height="22" viewBox="0 0 24 22"><path d="M0.8 17 V0.8 H18.5" fill="none" stroke="#4a4a4a" stroke-width="1.2"/><g transform="translate(2.4,2.6)"><rect x="0.75" y="0.75" width="17.8" height="15.2" fill="#fff"/><rect x="5.02" y="4.85" width="9.26" height="7.0" fill="#fbb94a"/><path d="M0.75 4.85 H18.55 M0.75 11.85 H18.55 M5.02 0.75 V15.95 M14.28 0.75 V15.95" stroke="#4a4a4a" stroke-width="1.1" fill="none"/><rect x="0.75" y="0.75" width="17.8" height="15.2" fill="none" stroke="#4a4a4a" stroke-width="1.4"/></g></svg>
<div style="left:1420.5px;top:213.5px;width:249.7px;height:437.5px;background:#fff;border:1px solid #6c6c6c;border-radius:6px;box-shadow:0 8px 14px -2px rgba(0,0,0,.20),0 2px 4px rgba(0,0,0,.10);"></div>
<div style="left:1422px;top:555px;width:248px;height:57px;background:#f3f3f3;"></div>
<span id="t171" class="t" style="left:1487.8px;top:234.60px;font-size:15px;line-height:21px;color:#1f1f1f;font-weight:700;letter-spacing:0.416px;"><u>G</u>reater Than...</span>
<span id="t172" class="t" style="left:1487.8px;top:290.60px;font-size:15px;line-height:21px;color:#1f1f1f;font-weight:700;letter-spacing:-0.046px;"><u>L</u>ess Than...</span>
<span id="t173" class="t" style="left:1487.8px;top:346.60px;font-size:15px;line-height:21px;color:#1f1f1f;font-weight:700;letter-spacing:0.389px;"><u>B</u>etween...</span>
<span id="t174" class="t" style="left:1487.8px;top:402.60px;font-size:15px;line-height:21px;color:#1f1f1f;font-weight:700;letter-spacing:0.417px;"><u>E</u>qual To...</span>
<span id="t175" class="t" style="left:1487.8px;top:458.60px;font-size:15px;line-height:21px;color:#1f1f1f;font-weight:700;letter-spacing:0.473px;"><u>T</u>ext that Contains...</span>
<span id="t176" class="t" style="left:1487.8px;top:514.60px;font-size:15px;line-height:21px;color:#1f1f1f;font-weight:700;letter-spacing:0.537px;"><u>A</u> Date Occurring...</span>
<span id="t177" class="t" style="left:1487.8px;top:570.60px;font-size:15px;line-height:21px;color:#1f1f1f;font-weight:700;letter-spacing:0.470px;"><u>D</u>uplicate Values...</span>
<span id="t178" class="t" style="left:1472px;top:621.10px;font-size:15px;line-height:21px;color:#1f1f1f;letter-spacing:0.041px;"><u>M</u>ore Rules...</span>
<svg style="left:1440.5px;top:229.5px;" width="41" height="37" viewBox="0 0 41 37"><rect x="0.75" y="0.75" width="36.5" height="28" fill="#fff"/><rect x="11" y="9.5" width="17" height="13" fill="#f9cd7e"/>
<path d="M0.75 9.5 H37.25 M0.75 19 H37.25 M11 0.75 V28.75 M28 0.75 V28.75" stroke="#4a4a4a" stroke-width="1.1" fill="none"/>
<rect x="0.75" y="0.75" width="36.5" height="28" fill="none" stroke="#4a4a4a" stroke-width="1.5"/><path d="M11 9.5 H28 V19" fill="none" stroke="#ec8f22" stroke-width="1.6"/><path d="M11 9.5 V22" stroke="#ec8f22" stroke-width="1.2"/><rect x="16.75" y="17.75" width="22.5" height="17" fill="#fff" stroke="#4a4a4a" stroke-width="1.5"/><path d="M24.5 21.5 L32.5 25.5 L24.5 29.5" fill="none" stroke="#4a4a4a" stroke-width="1.3" stroke-linecap="round" stroke-linejoin="round"/></svg>
<svg style="left:1440.5px;top:285.5px;" width="41" height="37" viewBox="0 0 41 37"><rect x="0.75" y="0.75" width="36.5" height="28" fill="#fff"/><rect x="11" y="9.5" width="17" height="13" fill="#f9cd7e"/>
<path d="M0.75 9.5 H37.25 M0.75 19 H37.25 M11 0.75 V28.75 M28 0.75 V28.75" stroke="#4a4a4a" stroke-width="1.1" fill="none"/>
<rect x="0.75" y="0.75" width="36.5" height="28" fill="none" stroke="#4a4a4a" stroke-width="1.5"/><path d="M11 9.5 H28 V19" fill="none" stroke="#ec8f22" stroke-width="1.6"/><path d="M11 9.5 V22" stroke="#ec8f22" stroke-width="1.2"/><rect x="16.75" y="17.75" width="22.5" height="17" fill="#fff" stroke="#4a4a4a" stroke-width="1.5"/><path d="M32 21.5 L24 25.5 L32 29.5" fill="none" stroke="#4a4a4a" stroke-width="1.3" stroke-linecap="round" stroke-linejoin="round"/></svg>
<svg style="left:1440.5px;top:341.5px;" width="39" height="30" viewBox="0 0 39 30"><rect x="0.75" y="0.75" width="36.5" height="28" fill="#fff"/><rect x="0.75" y="0.75" width="10.25" height="8.75" fill="#5ea8ea"/><rect x="28" y="0.75" width="9.25" height="8.75" fill="#5ea8ea"/><rect x="11" y="9.5" width="17" height="9.5" fill="#f9cd7e"/>
<path d="M0.75 9.5 H37.25 M0.75 19 H37.25 M11 0.75 V28.75 M28 0.75 V28.75" stroke="#4a4a4a" stroke-width="1.1" fill="none"/>
<rect x="0.75" y="0.75" width="36.5" height="28" fill="none" stroke="#4a4a4a" stroke-width="1.5"/><rect x="11" y="9.5" width="17" height="9.5" fill="none" stroke="#ec8f22" stroke-width="1.4"/><path d="M0.75 0.75 H11 V9.5 H0.75 Z M28 0.75 H37.25 V9.5 H28 Z" fill="none" stroke="#1e78c8" stroke-width="1.2"/></svg>
<svg style="left:1440.5px;top:397.5px;" width="41" height="37" viewBox="0 0 41 37"><rect x="0.75" y="0.75" width="36.5" height="28" fill="#fff"/><rect x="11" y="9.5" width="17" height="13" fill="#f9cd7e"/>
<path d="M0.75 9.5 H37.25 M0.75 19 H37.25 M11 0.75 V28.75 M28 0.75 V28.75" stroke="#4a4a4a" stroke-width="1.1" fill="none"/>
<rect x="0.75" y="0.75" width="36.5" height="28" fill="none" stroke="#4a4a4a" stroke-width="1.5"/><path d="M11 9.5 H28 V19" fill="none" stroke="#ec8f22" stroke-width="1.6"/><path d="M11 9.5 V22" stroke="#ec8f22" stroke-width="1.2"/><rect x="16.75" y="17.75" width="22.5" height="17" fill="#fff" stroke="#4a4a4a" stroke-width="1.5"/><path d="M23 23.5 H33 M23 28 H33" stroke="#4a4a4a" stroke-width="1.4"/></svg>
<svg style="left:1440.5px;top:453.5px;" width="41" height="37" viewBox="0 0 41 37"><rect x="0.75" y="0.75" width="36.5" height="28" fill="#fff"/><rect x="11" y="9.5" width="17" height="13" fill="#f9cd7e"/>
<path d="M0.75 9.5 H37.25 M0.75 19 H37.25 M11 0.75 V28.75 M28 0.75 V28.75" stroke="#4a4a4a" stroke-width="1.1" fill="none"/>
<rect x="0.75" y="0.75" width="36.5" height="28" fill="none" stroke="#4a4a4a" stroke-width="1.5"/><path d="M11 9.5 H28 V19" fill="none" stroke="#ec8f22" stroke-width="1.6"/><path d="M11 9.5 V22" stroke="#ec8f22" stroke-width="1.2"/><rect x="16.75" y="17.75" width="22.5" height="17" fill="#fff" stroke="#4a4a4a" stroke-width="1.5"/><text x="28" y="32" font-size="15.5" text-anchor="middle" fill="#4a4a4a" font-family="Liberation Sans">a</text></svg>
<svg style="left:1440.5px;top:509.5px;" width="41" height="37" viewBox="0 0 41 37"><rect x="0.75" y="0.75" width="36.5" height="28" fill="#fff"/><rect x="11" y="9.5" width="17" height="13" fill="#f9cd7e"/>
<path d="M0.75 9.5 H37.25 M0.75 19 H37.25 M11 0.75 V28.75 M28 0.75 V28.75" stroke="#4a4a4a" stroke-width="1.1" fill="none"/>
<rect x="0.75" y="0.75" width="36.5" height="28" fill="none" stroke="#4a4a4a" stroke-width="1.5"/><path d="M11 9.5 H28 V19" fill="none" stroke="#ec8f22" stroke-width="1.6"/><path d="M11 9.5 V22" stroke="#ec8f22" stroke-width="1.2"/><rect x="20.75" y="18.75" width="18.5" height="16.5" fill="#fafafa" stroke="#4a4a4a" stroke-width="1.5"/><path d="M20.75 22.5 H39.25 M24.5 16.5 V20 M35.5 16.5 V20" stroke="#4a4a4a" stroke-width="1.3"/></svg>
<svg style="left:1440.5px;top:565px;" width="39" height="30" viewBox="0 0 39 30"><rect x="0.75" y="0.75" width="36.5" height="28" fill="#fff"/><rect x="11" y="0.75" width="17" height="8.75" fill="#f9cd7e"/><rect x="11" y="19" width="17" height="9.75" fill="#f9cd7e"/>
<path d="M0.75 9.5 H37.25 M0.75 19 H37.25 M11 0.75 V28.75 M28 0.75 V28.75" stroke="#4a4a4a" stroke-width="1.1" fill="none"/>
<rect x="0.75" y="0.75" width="36.5" height="28" fill="none" stroke="#4a4a4a" stroke-width="1.5"/><path d="M11 0.75 V9.5 H28 V0.75 M11 28.75 V19 H28 V28.75" fill="none" stroke="#ec8f22" stroke-width="1.4"/></svg>
<div style="left:1416px;top:550px;width:248px;height:57px;border:5px solid #0a4ad6;"></div>
</body></html>
